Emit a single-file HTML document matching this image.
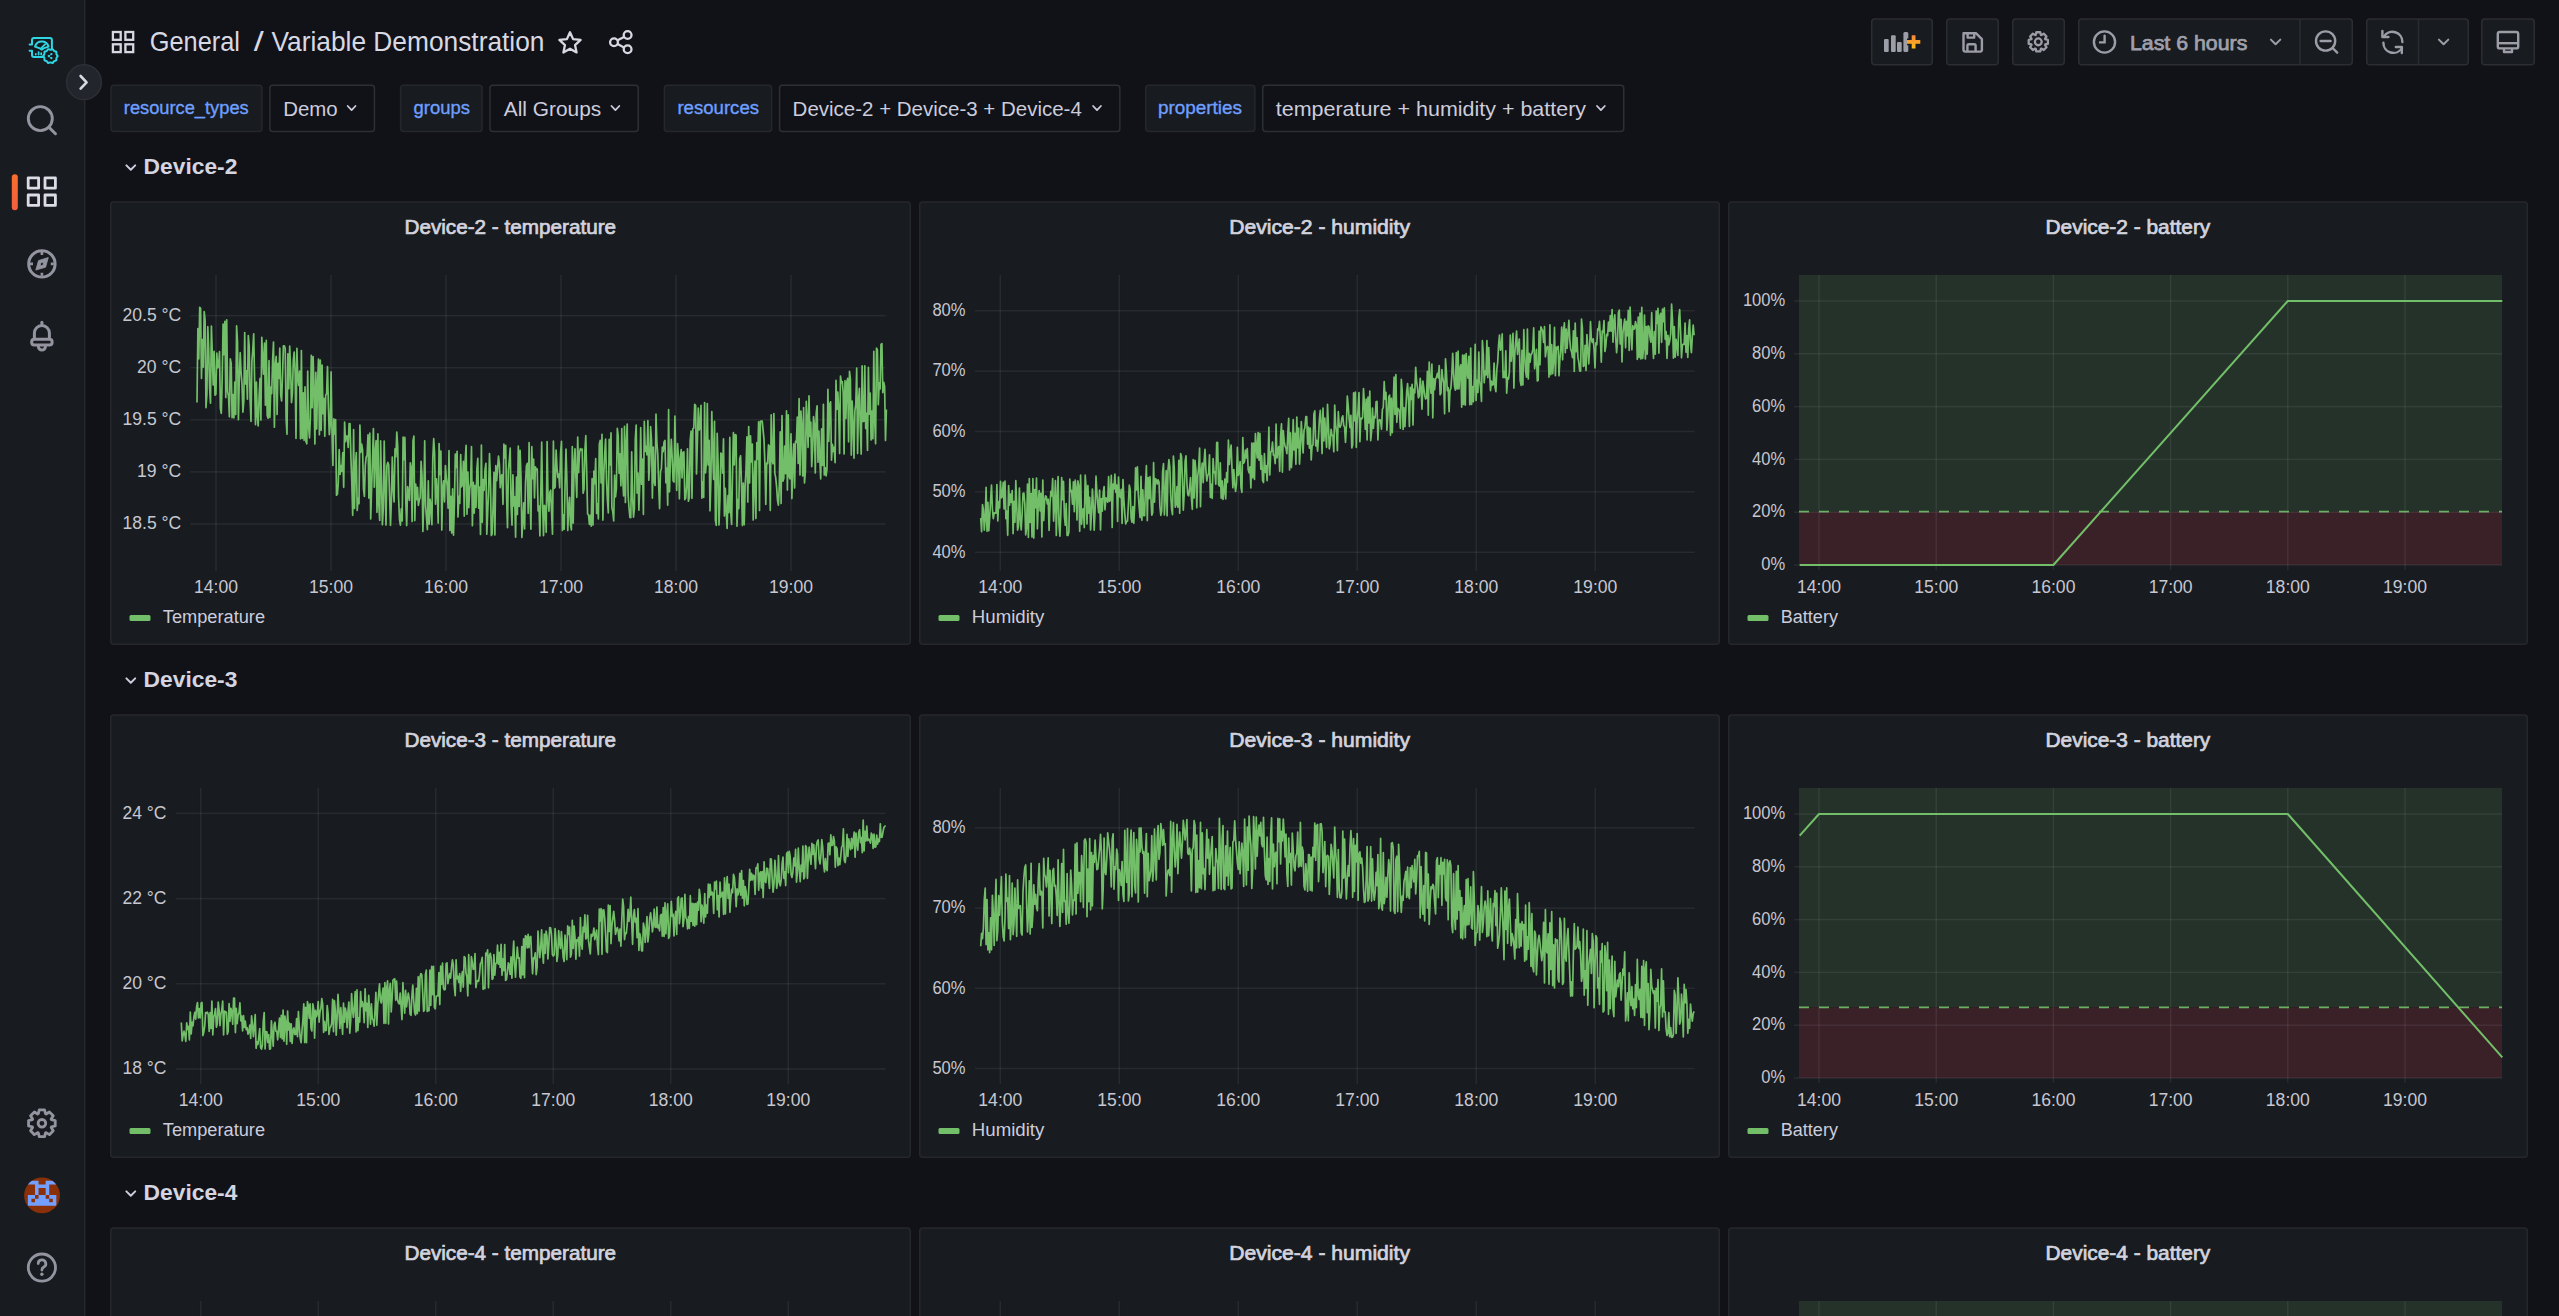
<!DOCTYPE html><html><head><meta charset="utf-8"><style>html,body{margin:0;padding:0;background:#111217;width:2559px;height:1316px;overflow:hidden}svg{display:block;font-family:"Liberation Sans",sans-serif}</style></head><body>
<svg width="2559" height="1316" viewBox="0 0 2559 1316">
<rect x="0" y="0" width="2559" height="1316" fill="#111217"/>
<rect x="0" y="0" width="84" height="1316" fill="#181b1f"/>
<rect x="84" y="0" width="1.5" height="1316" fill="#25272d"/>
<g fill="none" stroke="#2fd6e4" stroke-width="2" stroke-linejoin="round" stroke-linecap="round"><path d="M29.6 44.4 h2.4 V40 a2 2 0 0 1 2 -2 H49.9 a2 2 0 0 1 2 2 V49.6"/><path d="M29.6 50.7 h2.4 V55.1 a2 2 0 0 0 2 2 H43.6"/><path d="M35 46.6 A7.1 7.1 0 0 1 48.6 46.6 L43.4 48.4 L41.7 49.6 L40 48.4 Z"/><path d="M41.7 47.6 L45.2 44.2" stroke-width="1.8"/><path d="M35.8 54.6 v-0.6 M38.6 54.6 v-2.4 M41.2 54.6 v-1.4" stroke-width="1.8"/><polygon points="57.70,56.10 56.39,58.05 56.31,60.39 54.10,61.20 52.66,63.04 50.40,62.40 48.14,63.04 46.70,61.20 44.49,60.39 44.41,58.05 43.10,56.10 44.41,54.15 44.49,51.81 46.70,51.00 48.14,49.16 50.40,49.80 52.66,49.16 54.10,51.00 56.31,51.81 56.39,54.15"/></g>
<g fill="#2fd6e4"><circle cx="48.7" cy="56.1" r="1.1"/><circle cx="51.4" cy="54.1" r="1.1"/><circle cx="51.4" cy="58.2" r="1.1"/></g>
<path d="M48.7 56.1 L51.4 54.1 M48.7 56.1 L51.4 58.2" stroke="#2fd6e4" stroke-width="0.9"/>
<g fill="none" stroke="#9494a0" stroke-width="2.9" stroke-linecap="round"><circle cx="40.3" cy="118.6" r="12"/><path d="M49.3 127.6 l6.2 6.2"/></g>
<rect x="11.8" y="174.2" width="6" height="36" rx="3" fill="url(#og)"/>
<defs><linearGradient id="og" x1="0" y1="0" x2="0" y2="1"><stop offset="0" stop-color="#f76e2c"/><stop offset="1" stop-color="#f55f3e"/></linearGradient></defs>
<g fill="none" stroke="#dcdce6" stroke-width="2.8" stroke-linejoin="round"><rect x="28.2" y="177.8" width="10.4" height="10.4"/><rect x="45" y="177.8" width="10.4" height="10.4"/><rect x="28.2" y="195" width="10.4" height="10.4"/><rect x="45" y="195" width="10.4" height="10.4"/></g>
<g fill="none" stroke="#9494a0" stroke-width="3" stroke-linejoin="round" stroke-linecap="butt"><circle cx="41.9" cy="263.9" r="13.2"/><path d="M41.9 252 v3 M41.9 272.8 v3 M30 263.9 h3 M50.8 263.9 h3" stroke-width="2.6"/></g>
<path d="M48.3 257.5 L45.6 267.2 L35.8 270.1 L38.5 260.6 Z M43.6 262 L40.6 263 L40.2 266 L43.2 265 Z" fill="#9494a0" fill-rule="evenodd" stroke="#9494a0" stroke-width="0.8" stroke-linejoin="round"/>
<g fill="none" stroke="#9494a0" stroke-width="3" stroke-linejoin="round" stroke-linecap="round"><path d="M34.4 338.6 V333 a7.5 7.5 0 0 1 15 0 V338.6"/><rect x="31.7" y="339.2" width="20.4" height="5.8" rx="2.6"/><path d="M38.4 346.6 a3.5 3.5 0 0 0 7 0"/><path d="M41.9 322.2 v2.4"/></g>
<g fill="none" stroke="#9494a0" stroke-width="2.8" stroke-linejoin="round"><polygon points="55.23,1120.60 55.23,1126.00 51.45,1126.89 51.19,1127.51 53.24,1130.81 49.41,1134.64 46.11,1132.59 45.49,1132.85 44.60,1136.63 39.20,1136.63 38.31,1132.85 37.69,1132.59 34.39,1134.64 30.56,1130.81 32.61,1127.51 32.35,1126.89 28.57,1126.00 28.57,1120.60 32.35,1119.71 32.61,1119.09 30.56,1115.79 34.39,1111.96 37.69,1114.01 38.31,1113.75 39.20,1109.97 44.60,1109.97 45.49,1113.75 46.11,1114.01 49.41,1111.96 53.24,1115.79 51.19,1119.09 51.45,1119.71"/><circle cx="41.9" cy="1123.3" r="3.8"/></g>
<clipPath id="avc"><circle cx="42.05" cy="1195.4" r="17.9"/></clipPath>
<g clip-path="url(#avc)"><rect x="23" y="1176" width="40" height="40" fill="#8a3008"/><path fill="#73a0ff" d="M27.86 1180.86 h3.56 v3.56 h-3.56 z M31.42 1180.86 h3.56 v3.56 h-3.56 z M34.98 1180.86 h3.56 v3.56 h-3.56 z M45.66 1180.86 h3.56 v3.56 h-3.56 z M49.22 1180.86 h3.56 v3.56 h-3.56 z M52.78 1180.86 h3.56 v3.56 h-3.56 z M34.98 1184.42 h3.56 v3.56 h-3.56 z M38.54 1184.42 h3.56 v3.56 h-3.56 z M42.10 1184.42 h3.56 v3.56 h-3.56 z M45.66 1184.42 h3.56 v3.56 h-3.56 z M34.98 1187.98 h3.56 v3.56 h-3.56 z M45.66 1187.98 h3.56 v3.56 h-3.56 z M34.98 1191.54 h3.56 v3.56 h-3.56 z M45.66 1191.54 h3.56 v3.56 h-3.56 z M27.86 1195.10 h3.56 v3.56 h-3.56 z M31.42 1195.10 h3.56 v3.56 h-3.56 z M38.54 1195.10 h3.56 v3.56 h-3.56 z M42.10 1195.10 h3.56 v3.56 h-3.56 z M49.22 1195.10 h3.56 v3.56 h-3.56 z M52.78 1195.10 h3.56 v3.56 h-3.56 z M27.86 1198.66 h3.56 v3.56 h-3.56 z M34.98 1198.66 h3.56 v3.56 h-3.56 z M38.54 1198.66 h3.56 v3.56 h-3.56 z M42.10 1198.66 h3.56 v3.56 h-3.56 z M45.66 1198.66 h3.56 v3.56 h-3.56 z M52.78 1198.66 h3.56 v3.56 h-3.56 z M27.86 1202.22 h3.56 v3.56 h-3.56 z M31.42 1202.22 h3.56 v3.56 h-3.56 z M34.98 1202.22 h3.56 v3.56 h-3.56 z M38.54 1202.22 h3.56 v3.56 h-3.56 z M42.10 1202.22 h3.56 v3.56 h-3.56 z M45.66 1202.22 h3.56 v3.56 h-3.56 z M49.22 1202.22 h3.56 v3.56 h-3.56 z M52.78 1202.22 h3.56 v3.56 h-3.56 z "/></g>
<g fill="none" stroke="#9494a0" stroke-width="2.8" stroke-linecap="round"><circle cx="41.9" cy="1267.6" r="13.6"/><path d="M38.2 1263.6 a3.8 3.8 0 1 1 5.6 3.4 c-1.4 0.8 -1.9 1.6 -1.9 3"/></g><circle cx="41.9" cy="1274.2" r="1.7" fill="#9494a0"/>
<circle cx="84" cy="82.2" r="17.4" fill="#22252b" stroke="#2c2f35" stroke-width="1.5"/>
<path d="M80.6 76 l6 6.3 l-6 6.3" fill="none" stroke="#d8d8e2" stroke-width="2.6" stroke-linecap="round" stroke-linejoin="round"/>
<g fill="none" stroke="#d8d8e2" stroke-width="2.3"><rect x="112.9" y="32" width="7.8" height="7.8"/><rect x="125.4" y="32" width="7.8" height="7.8"/><rect x="112.9" y="44.3" width="7.8" height="7.8"/><rect x="125.4" y="44.3" width="7.8" height="7.8"/></g>
<text x="149.80" y="50.9" font-size="27.5" fill="#d8d9e3" font-weight="normal" textLength="90.16" lengthAdjust="spacingAndGlyphs" >General</text>
<text x="253.80" y="50.9" font-size="27.5" fill="#d8d9e3" font-weight="normal" textLength="10.03" lengthAdjust="spacingAndGlyphs" >/</text>
<text x="271.50" y="50.9" font-size="27.5" fill="#d8d9e3" font-weight="normal" textLength="272.93" lengthAdjust="spacingAndGlyphs" >Variable Demonstration</text>
<polygon points="570.00,32.20 573.12,39.11 580.65,39.94 575.04,45.04 576.58,52.46 570.00,48.70 563.42,52.46 564.96,45.04 559.35,39.94 566.88,39.11" fill="none" stroke="#d8d8e2" stroke-width="2.3" stroke-linejoin="round"/>
<g fill="none" stroke="#d8d8e2" stroke-width="2.3"><circle cx="627.6" cy="35" r="3.9"/><circle cx="614" cy="42.2" r="3.9"/><circle cx="627.6" cy="49.3" r="3.9"/><path d="M617.6 40.3 l6.4 -3.4 M617.6 44.1 l6.4 3.4"/></g>
<rect x="1871.75" y="18.95" width="60.5" height="45.8" rx="3" fill="#181b1f" stroke="#2a2d33" stroke-width="1.5"/>
<rect x="1946.75" y="18.95" width="51.5" height="45.8" rx="3" fill="#181b1f" stroke="#2a2d33" stroke-width="1.5"/>
<rect x="2012.75" y="18.95" width="51.5" height="45.8" rx="3" fill="#181b1f" stroke="#2a2d33" stroke-width="1.5"/>
<rect x="2078.75" y="18.95" width="273.5" height="45.8" rx="3" fill="#181b1f" stroke="#2a2d33" stroke-width="1.5"/>
<rect x="2299.3" y="19" width="1.5" height="46" fill="#2a2d33"/>
<rect x="2366.75" y="18.95" width="101.5" height="45.8" rx="3" fill="#181b1f" stroke="#2a2d33" stroke-width="1.5"/>
<rect x="2417.8" y="19" width="1.5" height="46" fill="#2a2d33"/>
<rect x="2481.75" y="18.95" width="52.5" height="45.8" rx="3" fill="#181b1f" stroke="#2a2d33" stroke-width="1.5"/>
<g fill="#9d9da8"><rect x="1884" y="39.1" width="4.7" height="12.9" rx="1"/><rect x="1891" y="35.3" width="4.7" height="16.7" rx="1"/><rect x="1897" y="42" width="4.7" height="10" rx="1"/><rect x="1903.4" y="32" width="4.9" height="20" rx="1.5"/></g>
<path d="M1907 41.9 h13.2 M1913.6 35.3 v13.2" stroke="#181b1f" stroke-width="6.6"/>
<defs><linearGradient id="pg" x1="0" y1="0" x2="0" y2="1"><stop offset="0" stop-color="#f7843a"/><stop offset="1" stop-color="#fbbf1a"/></linearGradient></defs>
<path d="M1906.9 40 h13.4 v3.8 h-13.4 z M1911.7 35.2 h3.8 v13.4 h-3.8 z" fill="url(#pg)"/>
<g fill="none" stroke="#9d9da8" stroke-width="2.4" stroke-linejoin="round"><path d="M1963.5 33.2 h12.4 l6 6 v10.8 a1.6 1.6 0 0 1 -1.6 1.6 h-15.2 a1.6 1.6 0 0 1 -1.6 -1.6 v-15.2 a1.6 1.6 0 0 1 1.6 -1.6 z"/><path d="M1967.6 33.4 v4.2 h6.6 v-4.2"/><path d="M1967.4 51.2 v-5.6 a1.4 1.4 0 0 1 1.4 -1.4 h5.4 a1.4 1.4 0 0 1 1.4 1.4 v5.6"/></g>
<g fill="none" stroke="#9d9da8" stroke-width="2.3" stroke-linejoin="round"><polygon points="2047.90,39.90 2047.90,43.80 2045.23,44.46 2045.04,44.90 2046.47,47.26 2043.71,50.02 2041.35,48.59 2040.91,48.78 2040.25,51.45 2036.35,51.45 2035.69,48.78 2035.25,48.59 2032.89,50.02 2030.13,47.26 2031.56,44.90 2031.37,44.46 2028.70,43.80 2028.70,39.90 2031.37,39.24 2031.56,38.80 2030.13,36.44 2032.89,33.68 2035.25,35.11 2035.69,34.92 2036.35,32.25 2040.25,32.25 2040.91,34.92 2041.35,35.11 2043.71,33.68 2046.47,36.44 2045.04,38.80 2045.23,39.24"/><circle cx="2038.3" cy="41.85" r="3.4"/></g>
<g fill="none" stroke="#9d9da8" stroke-width="2.4" stroke-linecap="round"><circle cx="2104.5" cy="42" r="10.6"/><path d="M2104.6 35.6 v6.8 h-4.6"/></g>
<text x="2130.00" y="50.1" font-size="21" fill="#a0a0ac" font-weight="normal" textLength="117.31" lengthAdjust="spacingAndGlyphs" stroke="#a0a0ac" stroke-width="0.75">Last 6 hours</text>
<path d="M2270.9 39.6 l4.7 4.7 l4.7 -4.7" fill="none" stroke="#9d9da8" stroke-width="2" stroke-linecap="round" stroke-linejoin="round"/>
<g fill="none" stroke="#9d9da8" stroke-width="2.4" stroke-linecap="round"><circle cx="2325.6" cy="41" r="9.6"/><path d="M2320.6 41 h10 M2332.6 48 l4.6 4.6"/></g>
<g fill="none" stroke="#9d9da8" stroke-width="2.4" stroke-linecap="round" stroke-linejoin="round"><path d="M2383.4 42.6 a10 10 0 0 0 18.6 5.4"/><path d="M2402.4 42 a10 10 0 0 0 -18.4 -5.6"/><path d="M2382.4 31 v6 h6"/><path d="M2401.8 53 v-6 h-6"/></g>
<path d="M2438.9 39.6 l4.7 4.7 l4.7 -4.7" fill="none" stroke="#9d9da8" stroke-width="2" stroke-linecap="round" stroke-linejoin="round"/>
<g fill="none" stroke="#9d9da8" stroke-width="2.4" stroke-linejoin="round"><rect x="2497.8" y="32" width="20.4" height="16.4" rx="2"/><path d="M2498 43.2 h20"/><path d="M2504 48.6 v3.4 h8 v-3.4"/></g>
<rect x="111.05" y="85.15" width="150.89999999999998" height="46.29999999999998" rx="3" fill="#181b1f" stroke="#24272c" stroke-width="1.5"/>
<rect x="269.84999999999997" y="85.15" width="104.60000000000002" height="46.29999999999998" rx="3" fill="#111217" stroke="#2c2f36" stroke-width="1.5"/>
<text x="123.80" y="113.7" font-size="18" fill="#6e9fff" font-weight="normal" textLength="124.91" lengthAdjust="spacingAndGlyphs" stroke="#6e9fff" stroke-width="0.35">resource_types</text>
<text x="283.20" y="116" font-size="21" fill="#ccccdc" font-weight="normal" textLength="54.52" lengthAdjust="spacingAndGlyphs" >Demo</text>
<path d="M347.7 106 l3.9 4.1 l3.9 -4.1" fill="none" stroke="#ccccdc" stroke-width="1.8" stroke-linecap="round" stroke-linejoin="round"/>
<rect x="400.65" y="85.15" width="81.40000000000003" height="46.29999999999998" rx="3" fill="#181b1f" stroke="#24272c" stroke-width="1.5"/>
<rect x="489.95" y="85.15" width="148.3" height="46.29999999999998" rx="3" fill="#111217" stroke="#2c2f36" stroke-width="1.5"/>
<text x="413.60" y="113.7" font-size="18" fill="#6e9fff" font-weight="normal" textLength="56.36" lengthAdjust="spacingAndGlyphs" stroke="#6e9fff" stroke-width="0.35">groups</text>
<text x="503.80" y="116" font-size="21" fill="#ccccdc" font-weight="normal" textLength="97.42" lengthAdjust="spacingAndGlyphs" >All Groups</text>
<path d="M611.5 106 l3.9 4.1 l3.9 -4.1" fill="none" stroke="#ccccdc" stroke-width="1.8" stroke-linecap="round" stroke-linejoin="round"/>
<rect x="664.35" y="85.15" width="107.29999999999995" height="46.29999999999998" rx="3" fill="#181b1f" stroke="#24272c" stroke-width="1.5"/>
<rect x="779.55" y="85.15" width="340.29999999999995" height="46.29999999999998" rx="3" fill="#111217" stroke="#2c2f36" stroke-width="1.5"/>
<text x="677.40" y="113.7" font-size="18" fill="#6e9fff" font-weight="normal" textLength="81.66" lengthAdjust="spacingAndGlyphs" stroke="#6e9fff" stroke-width="0.35">resources</text>
<text x="792.60" y="116" font-size="21" fill="#ccccdc" font-weight="normal" textLength="289.24" lengthAdjust="spacingAndGlyphs" >Device-2 + Device-3 + Device-4</text>
<path d="M1093.1 106 l3.9 4.1 l3.9 -4.1" fill="none" stroke="#ccccdc" stroke-width="1.8" stroke-linecap="round" stroke-linejoin="round"/>
<rect x="1145.75" y="85.15" width="109.09999999999991" height="46.29999999999998" rx="3" fill="#181b1f" stroke="#24272c" stroke-width="1.5"/>
<rect x="1262.75" y="85.15" width="361.0" height="46.29999999999998" rx="3" fill="#111217" stroke="#2c2f36" stroke-width="1.5"/>
<text x="1158.00" y="113.7" font-size="18" fill="#6e9fff" font-weight="normal" textLength="83.98" lengthAdjust="spacingAndGlyphs" stroke="#6e9fff" stroke-width="0.35">properties</text>
<text x="1275.80" y="116" font-size="21" fill="#ccccdc" font-weight="normal" textLength="310.28" lengthAdjust="spacingAndGlyphs" >temperature + humidity + battery</text>
<path d="M1597.0 106 l3.9 4.1 l3.9 -4.1" fill="none" stroke="#ccccdc" stroke-width="1.8" stroke-linecap="round" stroke-linejoin="round"/>
<path d="M126.4 165.4 l4.4 4.4 l4.4 -4.4" fill="none" stroke="#ccccdc" stroke-width="2" stroke-linecap="round" stroke-linejoin="round"/>
<text x="143.60" y="173.8" font-size="22.6" fill="#d4d5e0" font-weight="bold" textLength="93.74" lengthAdjust="spacingAndGlyphs" >Device-2</text>
<rect x="110.75" y="201.9" width="799.5" height="442.35" rx="3" fill="#181b1f" stroke="#24272c" stroke-width="1.5"/>
<text x="404.44" y="234.4" font-size="20" fill="#d2d3de" font-weight="normal" textLength="211.63" lengthAdjust="spacingAndGlyphs" stroke="#d2d3de" stroke-width="0.7">Device-2 - temperature</text>
<rect x="215.25" y="275" width="1.5" height="296" fill="rgba(204,204,220,0.085)"/>
<text x="194.05" y="592.5" font-size="18" fill="#c7c7d1" font-weight="normal" textLength="43.96" lengthAdjust="spacingAndGlyphs" >14:00</text>
<rect x="330.25" y="275" width="1.5" height="296" fill="rgba(204,204,220,0.085)"/>
<text x="309.05" y="592.5" font-size="18" fill="#c7c7d1" font-weight="normal" textLength="43.96" lengthAdjust="spacingAndGlyphs" >15:00</text>
<rect x="445.25" y="275" width="1.5" height="296" fill="rgba(204,204,220,0.085)"/>
<text x="424.05" y="592.5" font-size="18" fill="#c7c7d1" font-weight="normal" textLength="43.96" lengthAdjust="spacingAndGlyphs" >16:00</text>
<rect x="560.25" y="275" width="1.5" height="296" fill="rgba(204,204,220,0.085)"/>
<text x="539.05" y="592.5" font-size="18" fill="#c7c7d1" font-weight="normal" textLength="43.96" lengthAdjust="spacingAndGlyphs" >17:00</text>
<rect x="675.25" y="275" width="1.5" height="296" fill="rgba(204,204,220,0.085)"/>
<text x="654.05" y="592.5" font-size="18" fill="#c7c7d1" font-weight="normal" textLength="43.96" lengthAdjust="spacingAndGlyphs" >18:00</text>
<rect x="790.25" y="275" width="1.5" height="296" fill="rgba(204,204,220,0.085)"/>
<text x="769.05" y="592.5" font-size="18" fill="#c7c7d1" font-weight="normal" textLength="43.96" lengthAdjust="spacingAndGlyphs" >19:00</text>
<rect x="190.3" y="314.85" width="695.4000000000001" height="1.5" fill="rgba(204,204,220,0.085)"/>
<text x="122.50" y="320.90000000000003" font-size="18" fill="#c7c7d1" font-weight="normal" textLength="58.74" lengthAdjust="spacingAndGlyphs" >20.5 °C</text>
<rect x="190.3" y="366.95" width="695.4000000000001" height="1.5" fill="rgba(204,204,220,0.085)"/>
<text x="137.12" y="373.00000000000006" font-size="18" fill="#c7c7d1" font-weight="normal" textLength="44.10" lengthAdjust="spacingAndGlyphs" >20 °C</text>
<rect x="190.3" y="419.05" width="695.4000000000001" height="1.5" fill="rgba(204,204,220,0.085)"/>
<text x="122.50" y="425.1" font-size="18" fill="#c7c7d1" font-weight="normal" textLength="58.74" lengthAdjust="spacingAndGlyphs" >19.5 °C</text>
<rect x="190.3" y="471.15" width="695.4000000000001" height="1.5" fill="rgba(204,204,220,0.085)"/>
<text x="137.12" y="477.20000000000005" font-size="18" fill="#c7c7d1" font-weight="normal" textLength="44.10" lengthAdjust="spacingAndGlyphs" >19 °C</text>
<rect x="190.3" y="523.25" width="695.4000000000001" height="1.5" fill="rgba(204,204,220,0.085)"/>
<text x="122.50" y="529.3" font-size="18" fill="#c7c7d1" font-weight="normal" textLength="58.74" lengthAdjust="spacingAndGlyphs" >18.5 °C</text>
<clipPath id="cp1"><rect x="185.3" y="262" width="704.7" height="314"/></clipPath>
<polyline clip-path="url(#cp1)" points="197.0,402.6 197.9,328.6 198.8,359.0 199.7,307.4 200.6,308.4 201.5,378.4 202.4,339.6 203.3,367.1 204.2,311.5 205.1,320.2 206.0,407.6 206.9,393.9 207.8,326.7 208.7,349.3 209.6,387.7 210.5,403.2 211.4,326.0 212.3,353.3 213.2,385.1 214.1,351.3 215.0,395.2 215.9,394.2 216.8,353.2 217.7,367.8 218.6,366.1 219.5,351.7 220.4,408.7 221.3,413.3 222.2,377.9 223.1,324.0 224.0,354.6 224.9,321.3 225.8,397.5 226.7,319.8 227.6,391.6 228.5,396.2 229.4,416.8 230.3,358.8 231.2,363.4 232.1,417.7 233.0,394.5 233.9,417.9 234.8,382.1 235.7,414.6 236.6,325.9 237.5,341.7 238.4,419.7 239.3,378.1 240.2,352.7 241.1,372.9 242.0,383.7 242.9,412.1 243.8,401.2 244.7,332.5 245.6,383.9 246.5,370.8 247.4,399.2 248.3,335.6 249.2,346.0 250.1,399.7 251.0,421.5 251.9,361.4 252.8,350.0 253.7,333.8 254.6,379.3 255.5,424.7 256.4,382.2 257.3,415.9 258.2,426.0 259.1,396.6 260.0,378.3 260.9,420.1 261.8,337.3 262.7,358.1 263.6,374.2 264.5,343.2 265.4,405.2 266.3,340.4 267.2,415.5 268.1,418.2 269.0,360.6 269.9,417.4 270.8,387.1 271.7,393.6 272.6,360.6 273.5,342.0 274.4,427.2 275.3,364.8 276.2,356.4 277.1,414.4 278.0,363.3 278.9,378.5 279.8,348.0 280.7,394.8 281.6,401.0 282.5,376.5 283.4,345.9 284.3,345.9 285.2,348.2 286.1,418.6 287.0,434.3 287.9,353.8 288.8,388.7 289.7,346.0 290.6,369.6 291.5,402.6 292.4,393.5 293.3,360.0 294.2,352.1 295.1,371.2 296.0,438.3 296.9,348.4 297.8,377.5 298.7,385.3 299.6,371.0 300.5,438.8 301.4,350.6 302.3,438.4 303.2,392.8 304.1,440.3 305.0,386.8 305.9,441.3 306.8,443.8 307.7,371.2 308.6,426.9 309.5,437.9 310.4,417.2 311.3,355.3 312.2,407.7 313.1,356.6 314.0,390.1 314.9,444.0 315.8,372.4 316.7,429.0 317.6,382.4 318.5,359.0 319.4,434.7 320.3,360.0 321.2,430.3 322.1,365.1 323.0,413.6 323.9,398.4 324.8,436.3 325.7,395.0 326.6,394.0 327.5,366.5 328.4,407.3 329.3,434.7 330.2,424.9 331.1,371.9 332.0,433.0 332.9,465.5 333.8,418.9 334.7,434.0 335.6,419.5 336.5,495.2 337.4,494.2 338.3,482.7 339.2,449.6 340.1,474.5 341.0,465.7 341.9,471.3 342.8,452.7 343.7,487.3 344.6,422.1 345.5,441.6 346.4,436.2 347.3,436.0 348.2,447.4 349.1,423.5 350.0,423.5 350.9,456.7 351.8,482.2 352.7,515.3 353.6,429.7 354.5,508.5 355.4,465.2 356.3,452.7 357.2,510.5 358.1,498.3 359.0,503.7 359.9,425.1 360.8,452.5 361.7,444.2 362.6,450.0 363.5,488.9 364.4,496.4 365.3,465.7 366.2,456.9 367.1,455.3 368.0,434.9 368.9,498.1 369.8,433.2 370.7,519.0 371.6,488.9 372.5,459.4 373.4,428.6 374.3,487.2 375.2,452.2 376.1,440.6 377.0,512.3 377.9,433.9 378.8,504.4 379.7,520.4 380.6,440.8 381.5,484.0 382.4,524.8 383.3,508.0 384.2,441.1 385.1,485.9 386.0,525.1 386.9,465.7 387.8,462.4 388.7,464.8 389.6,495.5 390.5,525.5 391.4,499.5 392.3,457.1 393.2,488.7 394.1,501.9 395.0,448.9 395.9,456.8 396.8,432.0 397.7,445.7 398.6,497.8 399.5,519.3 400.4,525.2 401.3,508.8 402.2,521.0 403.1,437.0 404.0,459.6 404.9,437.4 405.8,502.3 406.7,525.6 407.6,486.7 408.5,493.6 409.4,500.4 410.3,462.9 411.2,468.2 412.1,521.5 413.0,440.8 413.9,436.1 414.8,520.6 415.7,484.1 416.6,499.7 417.5,487.3 418.4,505.4 419.3,500.2 420.2,497.4 421.1,461.4 422.0,475.3 422.9,531.5 423.8,501.0 424.7,440.8 425.6,506.0 426.5,517.9 427.4,529.6 428.3,480.8 429.2,524.2 430.1,499.4 431.0,507.3 431.9,524.7 432.8,458.7 433.7,438.7 434.6,453.3 435.5,504.1 436.4,478.9 437.3,492.3 438.2,523.1 439.1,443.5 440.0,474.6 440.9,451.0 441.8,530.1 442.7,488.1 443.6,480.8 444.5,501.9 445.4,465.6 446.3,477.9 447.2,486.0 448.1,508.2 449.0,450.7 449.9,530.5 450.8,496.3 451.7,533.1 452.6,488.9 453.5,535.1 454.4,504.6 455.3,454.1 456.2,467.4 457.1,451.3 458.0,517.0 458.9,496.4 459.8,503.4 460.7,454.5 461.6,486.9 462.5,483.6 463.4,461.4 464.3,516.1 465.2,460.5 466.1,445.4 467.0,514.2 467.9,472.1 468.8,507.7 469.7,489.2 470.6,482.9 471.5,446.5 472.4,525.7 473.3,482.4 474.2,513.1 475.1,485.3 476.0,507.4 476.9,468.8 477.8,458.4 478.7,508.2 479.6,487.1 480.5,534.4 481.4,445.0 482.3,522.3 483.2,479.6 484.1,490.3 485.0,469.8 485.9,463.3 486.8,534.2 487.7,512.1 488.6,490.9 489.5,453.6 490.4,477.6 491.3,535.5 492.2,533.8 493.1,505.6 494.0,472.3 494.9,534.9 495.8,465.5 496.7,480.7 497.6,468.0 498.5,456.0 499.4,464.4 500.3,487.7 501.2,475.9 502.1,474.6 503.0,504.4 503.9,444.2 504.8,458.0 505.7,445.3 506.6,497.4 507.5,527.7 508.4,469.8 509.3,460.7 510.2,448.2 511.1,506.8 512.0,525.2 512.9,474.8 513.8,506.0 514.7,496.9 515.6,537.2 516.5,477.2 517.4,514.5 518.3,446.2 519.2,506.4 520.1,450.3 521.0,477.7 521.9,537.4 522.8,521.1 523.7,502.8 524.6,529.0 525.5,483.3 526.4,466.0 527.3,463.4 528.2,513.3 529.1,442.6 530.0,495.4 530.9,529.2 531.8,446.7 532.7,478.7 533.6,459.0 534.5,497.9 535.4,466.8 536.3,469.9 537.2,469.0 538.1,510.9 539.0,506.0 539.9,535.9 540.8,492.2 541.7,442.1 542.6,502.7 543.5,535.7 544.4,505.4 545.3,507.5 546.2,532.3 547.1,441.5 548.0,496.8 548.9,511.1 549.8,492.3 550.7,490.2 551.6,513.2 552.5,534.2 553.4,441.2 554.3,488.3 555.2,487.0 556.1,450.0 557.0,467.8 557.9,477.4 558.8,474.1 559.7,487.8 560.6,452.8 561.5,441.3 562.4,530.5 563.3,514.9 564.2,529.4 565.1,482.7 566.0,449.2 566.9,480.0 567.8,530.4 568.7,507.4 569.6,497.4 570.5,525.0 571.4,529.8 572.3,446.5 573.2,523.1 574.1,463.0 575.0,448.8 575.9,477.5 576.8,497.4 577.7,437.2 578.6,472.6 579.5,452.6 580.4,448.6 581.3,449.9 582.2,449.1 583.1,493.2 584.0,489.4 584.9,450.5 585.8,435.7 586.7,472.5 587.6,514.0 588.5,514.6 589.4,524.3 590.3,515.4 591.2,526.2 592.1,478.7 593.0,525.1 593.9,471.1 594.8,483.6 595.7,458.5 596.6,513.5 597.5,503.8 598.4,518.9 599.3,444.5 600.2,440.4 601.1,483.0 602.0,434.3 602.9,520.1 603.8,474.5 604.7,453.5 605.6,439.1 606.5,479.2 607.4,500.1 608.3,512.9 609.2,439.4 610.1,464.9 611.0,432.9 611.9,507.9 612.8,511.6 613.7,521.0 614.6,475.0 615.5,496.9 616.4,488.4 617.3,428.3 618.2,435.5 619.1,473.3 620.0,453.8 620.9,485.8 621.8,428.5 622.7,477.9 623.6,496.0 624.5,426.3 625.4,502.4 626.3,443.1 627.2,424.1 628.1,494.4 629.0,507.5 629.9,517.5 630.8,517.6 631.7,451.9 632.6,497.6 633.5,517.1 634.4,508.3 635.3,439.1 636.2,425.1 637.1,493.0 638.0,473.1 638.9,510.2 639.8,482.9 640.7,427.7 641.6,484.2 642.5,459.2 643.4,514.3 644.3,421.4 645.2,451.4 646.1,446.6 647.0,454.8 647.9,420.7 648.8,480.2 649.7,462.7 650.6,426.7 651.5,440.2 652.4,498.1 653.3,447.0 654.2,481.5 655.1,485.5 656.0,414.2 656.9,442.5 657.8,454.9 658.7,485.5 659.6,508.6 660.5,471.1 661.4,469.0 662.3,447.0 663.2,451.7 664.1,441.9 665.0,440.4 665.9,482.8 666.8,468.1 667.7,505.2 668.6,409.7 669.5,491.8 670.4,458.5 671.3,439.4 672.2,457.6 673.1,480.7 674.0,482.0 674.9,416.2 675.8,461.4 676.7,490.5 677.6,443.7 678.5,457.8 679.4,498.8 680.3,458.4 681.2,449.6 682.1,478.0 683.0,452.5 683.9,451.8 684.8,499.6 685.7,498.3 686.6,485.5 687.5,448.8 688.4,501.2 689.3,497.4 690.2,440.6 691.1,431.2 692.0,498.3 692.9,428.6 693.8,428.0 694.7,404.4 695.6,405.3 696.5,473.9 697.4,441.6 698.3,408.1 699.2,429.9 700.1,427.2 701.0,405.4 701.9,498.1 702.8,481.9 703.7,497.5 704.6,402.6 705.5,472.8 706.4,462.7 707.3,403.5 708.2,465.0 709.1,440.3 710.0,510.8 710.9,479.4 711.8,411.6 712.7,452.6 713.6,479.5 714.5,421.3 715.4,520.4 716.3,525.3 717.2,433.3 718.1,464.3 719.0,525.0 719.9,499.5 720.8,453.0 721.7,454.4 722.6,473.1 723.5,438.8 724.4,515.9 725.3,488.4 726.2,511.1 727.1,528.4 728.0,495.7 728.9,512.6 729.8,437.4 730.7,511.0 731.6,524.5 732.5,474.5 733.4,432.6 734.3,464.9 735.2,434.5 736.1,435.1 737.0,526.2 737.9,499.5 738.8,508.6 739.7,458.9 740.6,455.7 741.5,484.4 742.4,525.6 743.3,483.2 744.2,524.8 745.1,486.2 746.0,470.1 746.9,436.9 747.8,501.9 748.7,426.5 749.6,483.0 750.5,435.8 751.4,461.9 752.3,444.1 753.2,519.9 754.1,483.2 755.0,461.1 755.9,518.4 756.8,442.7 757.7,459.2 758.6,421.9 759.5,510.5 760.4,421.3 761.3,421.1 762.2,421.1 763.1,430.2 764.0,439.4 764.9,464.0 765.8,504.5 766.7,463.1 767.6,463.5 768.5,444.9 769.4,446.2 770.3,510.3 771.2,414.8 772.1,460.3 773.0,463.8 773.9,413.6 774.8,473.2 775.7,477.6 776.6,486.6 777.5,500.4 778.4,505.1 779.3,485.7 780.2,431.9 781.1,503.5 782.0,415.5 782.9,481.1 783.8,478.5 784.7,446.0 785.6,473.7 786.5,410.9 787.4,490.1 788.3,414.8 789.2,476.7 790.1,478.8 791.0,433.8 791.9,498.6 792.8,463.7 793.7,443.9 794.6,487.9 795.5,441.4 796.4,442.3 797.3,417.1 798.2,463.4 799.1,398.7 800.0,474.9 800.9,411.0 801.8,425.3 802.7,476.0 803.6,407.6 804.5,482.9 805.4,471.2 806.3,401.3 807.2,421.3 808.1,447.4 809.0,395.8 809.9,436.5 810.8,422.2 811.7,466.7 812.6,449.7 813.5,416.7 814.4,424.0 815.3,472.9 816.2,413.3 817.1,405.8 818.0,462.2 818.9,431.0 819.8,458.5 820.7,478.9 821.6,428.8 822.5,465.4 823.4,404.3 824.3,474.9 825.2,467.5 826.1,476.0 827.0,468.6 827.9,389.3 828.8,441.3 829.7,404.1 830.6,401.8 831.5,460.1 832.4,444.3 833.3,451.3 834.2,447.3 835.1,462.7 836.0,380.4 836.9,409.5 837.8,392.1 838.7,410.3 839.6,453.6 840.5,376.1 841.4,382.7 842.3,381.7 843.2,392.5 844.1,454.0 845.0,380.6 845.9,418.4 846.8,382.0 847.7,378.4 848.6,441.8 849.5,371.3 850.4,379.2 851.3,455.1 852.2,401.1 853.1,424.5 854.0,458.2 854.9,410.9 855.8,404.3 856.7,368.1 857.6,453.4 858.5,400.6 859.4,388.4 860.3,427.9 861.2,454.1 862.1,365.8 863.0,421.4 863.9,421.5 864.8,365.8 865.7,428.5 866.6,413.3 867.5,450.4 868.4,367.4 869.3,414.2 870.2,393.0 871.1,439.9 872.0,411.0 872.9,438.8 873.8,351.3 874.7,421.0 875.6,443.8 876.5,348.1 877.4,349.8 878.3,404.7 879.2,382.8 880.1,389.0 881.0,344.3 881.9,343.6 882.8,392.6 883.7,382.3 884.6,386.1 885.5,440.5 886.4,409.5" fill="none" stroke="#73bf69" stroke-width="1.7" stroke-linejoin="round"/>
<rect x="129.5" y="615" width="21" height="6" rx="1.5" fill="#73bf69"/>
<text x="162.80" y="623.2" font-size="18" fill="#ccccdc" font-weight="normal" textLength="102.29" lengthAdjust="spacingAndGlyphs" >Temperature</text>
<rect x="919.75" y="201.9" width="799.5" height="442.35" rx="3" fill="#181b1f" stroke="#24272c" stroke-width="1.5"/>
<text x="1229.16" y="234.4" font-size="20" fill="#d2d3de" font-weight="normal" textLength="180.85" lengthAdjust="spacingAndGlyphs" stroke="#d2d3de" stroke-width="0.7">Device-2 - humidity</text>
<rect x="999.55" y="275" width="1.5" height="296" fill="rgba(204,204,220,0.085)"/>
<text x="978.35" y="592.5" font-size="18" fill="#c7c7d1" font-weight="normal" textLength="43.96" lengthAdjust="spacingAndGlyphs" >14:00</text>
<rect x="1118.55" y="275" width="1.5" height="296" fill="rgba(204,204,220,0.085)"/>
<text x="1097.35" y="592.5" font-size="18" fill="#c7c7d1" font-weight="normal" textLength="43.96" lengthAdjust="spacingAndGlyphs" >15:00</text>
<rect x="1237.55" y="275" width="1.5" height="296" fill="rgba(204,204,220,0.085)"/>
<text x="1216.35" y="592.5" font-size="18" fill="#c7c7d1" font-weight="normal" textLength="43.96" lengthAdjust="spacingAndGlyphs" >16:00</text>
<rect x="1356.55" y="275" width="1.5" height="296" fill="rgba(204,204,220,0.085)"/>
<text x="1335.35" y="592.5" font-size="18" fill="#c7c7d1" font-weight="normal" textLength="43.96" lengthAdjust="spacingAndGlyphs" >17:00</text>
<rect x="1475.55" y="275" width="1.5" height="296" fill="rgba(204,204,220,0.085)"/>
<text x="1454.35" y="592.5" font-size="18" fill="#c7c7d1" font-weight="normal" textLength="43.96" lengthAdjust="spacingAndGlyphs" >18:00</text>
<rect x="1594.55" y="275" width="1.5" height="296" fill="rgba(204,204,220,0.085)"/>
<text x="1573.35" y="592.5" font-size="18" fill="#c7c7d1" font-weight="normal" textLength="43.96" lengthAdjust="spacingAndGlyphs" >19:00</text>
<rect x="975" y="309.95" width="719.5" height="1.5" fill="rgba(204,204,220,0.085)"/>
<text x="932.38" y="315.99999999999994" font-size="18" fill="#c7c7d1" font-weight="normal" textLength="33.15" lengthAdjust="spacingAndGlyphs" >80%</text>
<rect x="975" y="370.35" width="719.5" height="1.5" fill="rgba(204,204,220,0.085)"/>
<text x="932.38" y="376.4" font-size="18" fill="#c7c7d1" font-weight="normal" textLength="33.15" lengthAdjust="spacingAndGlyphs" >70%</text>
<rect x="975" y="430.75" width="719.5" height="1.5" fill="rgba(204,204,220,0.085)"/>
<text x="932.38" y="436.79999999999995" font-size="18" fill="#c7c7d1" font-weight="normal" textLength="33.15" lengthAdjust="spacingAndGlyphs" >60%</text>
<rect x="975" y="491.15" width="719.5" height="1.5" fill="rgba(204,204,220,0.085)"/>
<text x="932.38" y="497.2" font-size="18" fill="#c7c7d1" font-weight="normal" textLength="33.15" lengthAdjust="spacingAndGlyphs" >50%</text>
<rect x="975" y="551.55" width="719.5" height="1.5" fill="rgba(204,204,220,0.085)"/>
<text x="932.38" y="557.5999999999999" font-size="18" fill="#c7c7d1" font-weight="normal" textLength="33.15" lengthAdjust="spacingAndGlyphs" >40%</text>
<clipPath id="cp2"><rect x="970" y="262" width="730" height="314"/></clipPath>
<polyline clip-path="url(#cp2)" points="980.7,517.9 981.6,531.7 982.5,504.7 983.4,509.8 984.3,530.2 985.2,518.6 986.1,487.3 987.0,531.3 987.9,502.4 988.8,530.8 989.7,517.5 990.6,500.2 991.5,485.0 992.4,509.1 993.3,518.6 994.2,512.9 995.1,513.2 996.0,513.1 996.9,484.6 997.8,520.9 998.7,501.5 999.6,507.9 1000.5,481.4 1001.4,497.8 1002.3,496.5 1003.2,482.3 1004.1,509.0 1005.0,481.1 1005.9,518.7 1006.8,511.0 1007.7,535.3 1008.6,485.6 1009.5,505.2 1010.4,494.2 1011.3,502.4 1012.2,490.6 1013.1,533.7 1014.0,501.4 1014.9,522.3 1015.8,480.6 1016.7,504.8 1017.6,530.1 1018.5,526.2 1019.4,488.0 1020.3,518.3 1021.2,529.9 1022.1,514.4 1023.0,493.5 1023.9,493.1 1024.8,503.5 1025.7,535.0 1026.6,527.9 1027.5,484.0 1028.4,537.3 1029.3,478.5 1030.2,522.5 1031.1,493.5 1032.0,537.1 1032.9,478.6 1033.8,538.1 1034.7,489.5 1035.6,507.7 1036.5,478.1 1037.4,528.8 1038.3,502.4 1039.2,490.6 1040.1,510.9 1041.0,493.4 1041.9,536.9 1042.8,480.1 1043.7,520.6 1044.6,501.4 1045.5,495.8 1046.4,496.9 1047.3,503.9 1048.2,499.4 1049.1,530.5 1050.0,503.9 1050.9,491.4 1051.8,495.8 1052.7,478.6 1053.6,521.1 1054.5,505.9 1055.4,480.7 1056.3,535.5 1057.2,499.3 1058.1,476.6 1059.0,524.2 1059.9,536.1 1060.8,514.0 1061.7,477.5 1062.6,499.6 1063.5,481.4 1064.4,515.8 1065.3,525.3 1066.2,503.5 1067.1,535.5 1068.0,535.3 1068.9,531.8 1069.8,479.2 1070.7,491.7 1071.6,490.7 1072.5,504.2 1073.4,481.9 1074.3,511.7 1075.2,480.0 1076.1,487.8 1077.0,520.1 1077.9,480.8 1078.8,486.2 1079.7,531.3 1080.6,475.2 1081.6,524.3 1082.5,510.0 1083.4,508.6 1084.3,527.6 1085.2,475.2 1086.1,487.6 1087.0,524.0 1087.9,485.5 1088.8,513.1 1089.7,497.4 1090.6,530.0 1091.5,512.4 1092.4,489.1 1093.3,504.2 1094.2,530.2 1095.1,509.0 1096.0,476.2 1096.9,493.1 1097.8,504.6 1098.7,512.6 1099.6,490.0 1100.5,529.9 1101.4,498.6 1102.3,511.2 1103.2,492.8 1104.1,486.5 1105.0,509.8 1105.9,497.8 1106.8,499.2 1107.7,502.2 1108.6,476.7 1109.5,501.3 1110.4,499.4 1111.3,475.4 1112.2,527.5 1113.1,484.0 1114.0,488.9 1114.9,474.2 1115.8,492.3 1116.7,485.1 1117.6,521.4 1118.5,477.1 1119.4,495.5 1120.3,497.4 1121.2,489.4 1122.1,523.5 1123.0,479.6 1123.9,500.3 1124.8,513.8 1125.7,523.9 1126.6,521.6 1127.5,521.1 1128.4,504.4 1129.3,485.1 1130.2,489.8 1131.1,518.1 1132.0,522.2 1132.9,506.6 1133.8,523.3 1134.7,504.6 1135.6,467.8 1136.5,490.0 1137.4,466.9 1138.3,494.4 1139.2,507.7 1140.1,517.6 1141.0,476.4 1141.9,520.3 1142.8,489.8 1143.7,515.7 1144.6,515.7 1145.5,485.7 1146.4,465.5 1147.3,520.6 1148.2,477.6 1149.1,498.7 1150.0,476.7 1150.9,497.7 1151.8,515.1 1152.7,512.7 1153.6,462.7 1154.5,502.2 1155.4,478.5 1156.3,480.0 1157.2,484.0 1158.1,479.8 1159.0,482.1 1159.9,506.0 1160.8,515.4 1161.7,511.1 1162.6,472.0 1163.5,463.6 1164.4,514.9 1165.3,497.1 1166.2,470.7 1167.1,515.8 1168.0,470.3 1168.9,459.7 1169.8,466.8 1170.7,494.5 1171.6,508.8 1172.5,514.7 1173.4,456.1 1174.3,468.3 1175.2,507.1 1176.1,504.7 1177.0,486.6 1177.9,507.3 1178.8,460.4 1179.7,513.2 1180.6,453.5 1181.5,456.6 1182.4,478.5 1183.3,510.2 1184.2,493.6 1185.1,461.3 1186.0,455.8 1186.9,482.7 1187.8,494.7 1188.7,495.8 1189.6,489.0 1190.5,477.5 1191.4,497.8 1192.3,509.3 1193.2,459.7 1194.1,498.1 1195.0,460.4 1195.9,470.1 1196.8,507.8 1197.7,476.3 1198.6,468.2 1199.6,448.0 1200.5,506.7 1201.4,471.1 1202.3,463.0 1203.2,482.7 1204.1,461.5 1205.0,449.3 1205.9,470.1 1206.8,481.0 1207.7,475.7 1208.6,473.5 1209.5,454.9 1210.4,497.4 1211.3,484.3 1212.2,498.5 1213.1,458.7 1214.0,472.6 1214.9,471.8 1215.8,484.2 1216.7,442.6 1217.6,442.3 1218.5,484.4 1219.4,486.0 1220.3,462.9 1221.2,498.3 1222.1,480.8 1223.0,499.4 1223.9,491.4 1224.8,479.0 1225.7,498.9 1226.6,472.6 1227.5,482.4 1228.4,440.1 1229.3,464.4 1230.2,452.1 1231.1,445.0 1232.0,468.5 1232.9,487.8 1233.8,469.6 1234.7,483.6 1235.6,491.4 1236.5,483.4 1237.4,447.3 1238.3,475.5 1239.2,472.7 1240.1,461.5 1241.0,487.4 1241.9,492.3 1242.8,437.5 1243.7,463.2 1244.6,461.2 1245.5,450.1 1246.4,457.9 1247.3,448.5 1248.2,469.7 1249.1,472.8 1250.0,466.9 1250.9,487.9 1251.8,443.1 1252.7,477.8 1253.6,443.0 1254.5,479.5 1255.4,433.6 1256.3,446.1 1257.2,458.0 1258.1,432.6 1259.0,460.2 1259.9,433.4 1260.8,469.2 1261.7,455.8 1262.6,480.4 1263.5,482.5 1264.4,453.5 1265.3,472.5 1266.2,465.5 1267.1,480.6 1268.0,460.7 1268.9,427.2 1269.8,475.0 1270.7,452.4 1271.6,451.3 1272.5,442.2 1273.4,455.1 1274.3,455.6 1275.2,463.6 1276.1,424.2 1277.0,458.0 1277.9,450.1 1278.8,446.5 1279.7,471.3 1280.6,435.7 1281.5,423.9 1282.4,472.2 1283.3,430.7 1284.2,441.4 1285.1,446.3 1286.0,448.1 1286.9,453.7 1287.8,433.5 1288.7,418.3 1289.6,469.9 1290.5,432.9 1291.4,467.6 1292.3,453.0 1293.2,419.5 1294.1,450.0 1295.0,433.3 1295.9,464.3 1296.8,417.1 1297.7,447.8 1298.6,428.2 1299.5,464.1 1300.4,447.7 1301.3,421.7 1302.2,437.2 1303.1,453.0 1304.0,430.6 1304.9,427.7 1305.8,416.7 1306.7,416.7 1307.6,444.2 1308.5,427.2 1309.4,448.2 1310.3,428.1 1311.2,459.9 1312.1,445.7 1313.0,445.1 1313.9,414.3 1314.8,410.9 1315.7,445.9 1316.6,440.4 1317.6,451.1 1318.5,437.3 1319.4,419.2 1320.3,410.4 1321.2,424.4 1322.1,453.6 1323.0,408.1 1323.9,441.0 1324.8,418.2 1325.7,434.5 1326.6,447.4 1327.5,404.4 1328.4,424.6 1329.3,448.8 1330.2,443.6 1331.1,429.3 1332.0,435.5 1332.9,435.7 1333.8,451.8 1334.7,405.1 1335.6,424.3 1336.5,432.2 1337.4,450.6 1338.3,411.7 1339.2,425.5 1340.1,427.3 1341.0,425.0 1341.9,417.9 1342.8,415.8 1343.7,425.4 1344.6,427.2 1345.5,442.5 1346.4,426.1 1347.3,396.0 1348.2,405.5 1349.1,418.3 1350.0,427.7 1350.9,415.3 1351.8,448.0 1352.7,444.7 1353.6,392.9 1354.5,420.7 1355.4,392.0 1356.3,447.3 1357.2,420.6 1358.1,409.6 1359.0,392.6 1359.9,441.6 1360.8,418.2 1361.7,419.0 1362.6,417.3 1363.5,388.6 1364.4,403.8 1365.3,429.4 1366.2,399.2 1367.1,440.0 1368.0,397.1 1368.9,422.9 1369.8,391.2 1370.7,440.6 1371.6,431.5 1372.5,408.0 1373.4,428.5 1374.3,416.5 1375.2,417.8 1376.1,401.8 1377.0,401.4 1377.9,440.0 1378.8,420.9 1379.7,419.6 1380.6,420.8 1381.5,429.2 1382.4,409.4 1383.3,407.5 1384.2,381.5 1385.1,399.1 1386.0,392.3 1386.9,430.2 1387.8,415.8 1388.7,397.2 1389.6,395.1 1390.5,435.3 1391.4,398.3 1392.3,432.7 1393.2,402.3 1394.1,377.1 1395.0,414.5 1395.9,374.7 1396.8,422.3 1397.7,408.4 1398.6,409.4 1399.5,411.6 1400.4,428.3 1401.3,379.3 1402.2,390.5 1403.1,429.4 1404.0,407.7 1404.9,426.7 1405.8,409.5 1406.7,391.6 1407.6,383.7 1408.5,399.5 1409.4,426.4 1410.3,387.4 1411.2,399.5 1412.1,384.3 1413.0,425.1 1413.9,389.0 1414.8,392.8 1415.7,367.4 1416.6,381.3 1417.5,388.0 1418.4,398.0 1419.3,395.9 1420.2,378.4 1421.1,387.7 1422.0,409.1 1422.9,381.1 1423.8,388.2 1424.7,395.4 1425.6,399.0 1426.5,398.0 1427.4,371.3 1428.3,415.2 1429.2,362.1 1430.1,381.0 1431.0,393.2 1431.9,364.2 1432.8,417.8 1433.7,378.5 1434.6,389.6 1435.6,378.8 1436.5,377.1 1437.4,373.3 1438.3,377.9 1439.2,365.7 1440.1,394.8 1441.0,393.1 1441.9,369.5 1442.8,378.5 1443.7,382.6 1444.6,413.8 1445.5,358.9 1446.4,371.6 1447.3,390.6 1448.2,387.7 1449.1,411.7 1450.0,390.1 1450.9,388.4 1451.8,375.5 1452.7,353.4 1453.6,372.2 1454.5,386.3 1455.4,390.1 1456.3,352.7 1457.2,389.1 1458.1,351.2 1459.0,389.0 1459.9,369.0 1460.8,364.8 1461.7,407.2 1462.6,355.2 1463.5,404.5 1464.4,355.0 1465.3,405.1 1466.2,353.7 1467.1,371.8 1468.0,378.1 1468.9,356.4 1469.8,404.7 1470.7,348.1 1471.6,404.5 1472.5,386.7 1473.4,401.8 1474.3,380.3 1475.2,344.3 1476.1,400.5 1477.0,380.0 1477.9,392.5 1478.8,352.1 1479.7,380.9 1480.6,388.2 1481.5,401.5 1482.4,340.7 1483.3,354.3 1484.2,382.8 1485.1,371.0 1486.0,375.0 1486.9,340.5 1487.8,377.6 1488.7,347.5 1489.6,371.4 1490.5,390.6 1491.4,381.0 1492.3,385.1 1493.2,384.6 1494.1,363.1 1495.0,386.8 1495.9,391.6 1496.8,369.5 1497.7,362.1 1498.6,344.6 1499.5,335.2 1500.4,350.2 1501.3,347.3 1502.2,333.9 1503.1,377.7 1504.0,371.7 1504.9,377.6 1505.8,350.8 1506.7,393.2 1507.6,377.7 1508.5,379.1 1509.4,371.8 1510.3,335.1 1511.2,361.1 1512.1,349.8 1513.0,333.3 1513.9,388.1 1514.8,353.8 1515.7,341.7 1516.6,331.0 1517.5,354.4 1518.4,346.1 1519.3,339.1 1520.2,380.5 1521.1,385.4 1522.0,350.3 1522.9,385.0 1523.8,329.7 1524.7,355.7 1525.6,371.0 1526.5,377.2 1527.4,329.0 1528.3,379.0 1529.2,353.4 1530.1,362.2 1531.0,354.5 1531.9,353.7 1532.8,349.4 1533.7,327.8 1534.6,368.8 1535.5,362.3 1536.4,349.4 1537.3,381.0 1538.2,380.3 1539.1,331.2 1540.0,364.8 1540.9,326.8 1541.8,329.2 1542.7,331.1 1543.6,342.4 1544.5,326.7 1545.4,356.8 1546.3,349.6 1547.2,346.4 1548.1,347.1 1549.0,377.1 1549.9,324.8 1550.8,374.7 1551.7,344.7 1552.7,373.6 1553.6,360.8 1554.5,327.4 1555.4,375.6 1556.3,347.1 1557.2,349.2 1558.1,346.3 1559.0,375.8 1559.9,359.3 1560.8,348.4 1561.7,327.1 1562.6,359.8 1563.5,331.1 1564.4,322.9 1565.3,352.7 1566.2,329.0 1567.1,348.4 1568.0,333.9 1568.9,320.4 1569.8,339.8 1570.7,349.3 1571.6,351.9 1572.5,357.7 1573.4,330.9 1574.3,371.5 1575.2,323.1 1576.1,351.7 1577.0,337.5 1577.9,357.4 1578.8,362.4 1579.7,371.0 1580.6,371.1 1581.5,319.2 1582.4,328.1 1583.3,366.5 1584.2,365.7 1585.1,345.3 1586.0,370.5 1586.9,334.6 1587.8,346.7 1588.7,364.0 1589.6,349.6 1590.5,321.7 1591.4,339.3 1592.3,342.5 1593.2,338.8 1594.1,349.7 1595.0,367.9 1595.9,342.8 1596.8,344.7 1597.7,328.9 1598.6,329.8 1599.5,321.3 1600.4,339.1 1601.3,362.2 1602.2,331.0 1603.1,332.3 1604.0,320.5 1604.9,351.5 1605.8,346.4 1606.7,334.4 1607.6,335.7 1608.5,322.0 1609.4,331.1 1610.3,315.6 1611.2,331.2 1612.1,309.5 1613.0,342.2 1613.9,321.5 1614.8,314.8 1615.7,337.6 1616.6,352.7 1617.5,341.9 1618.4,312.7 1619.3,310.1 1620.2,344.0 1621.1,319.4 1622.0,361.9 1622.9,333.5 1623.8,325.4 1624.7,319.0 1625.6,347.8 1626.5,321.4 1627.4,335.8 1628.3,310.4 1629.2,350.5 1630.1,307.2 1631.0,331.5 1631.9,349.8 1632.8,325.7 1633.7,329.3 1634.6,328.5 1635.5,321.6 1636.4,325.4 1637.3,359.5 1638.2,317.2 1639.1,357.6 1640.0,313.2 1640.9,358.9 1641.8,307.3 1642.7,358.5 1643.6,346.7 1644.5,315.1 1645.4,358.9 1646.3,326.6 1647.2,354.2 1648.1,325.8 1649.0,326.9 1649.9,336.4 1650.8,342.1 1651.7,312.7 1652.6,340.1 1653.5,358.5 1654.4,331.7 1655.3,354.2 1656.2,311.1 1657.1,323.5 1658.0,308.3 1658.9,353.2 1659.8,316.0 1660.7,313.4 1661.6,342.4 1662.5,309.2 1663.4,321.6 1664.3,307.8 1665.2,339.3 1666.1,331.7 1667.0,358.5 1667.9,335.3 1668.8,344.9 1669.7,340.9 1670.7,333.7 1671.6,304.1 1672.5,319.6 1673.4,358.2 1674.3,326.5 1675.2,357.1 1676.1,339.4 1677.0,346.2 1677.9,355.5 1678.8,318.3 1679.7,309.7 1680.6,332.7 1681.5,357.8 1682.4,345.1 1683.3,344.1 1684.2,344.3 1685.1,323.1 1686.0,352.3 1686.9,335.7 1687.8,357.5 1688.7,329.3 1689.6,319.9 1690.5,344.2 1691.4,352.6 1692.3,336.4 1693.2,325.0 1694.1,335.3" fill="none" stroke="#73bf69" stroke-width="1.7" stroke-linejoin="round"/>
<rect x="938.5" y="615" width="21" height="6" rx="1.5" fill="#73bf69"/>
<text x="971.80" y="623.2" font-size="18" fill="#ccccdc" font-weight="normal" textLength="72.53" lengthAdjust="spacingAndGlyphs" >Humidity</text>
<rect x="1728.75" y="201.9" width="798.5" height="442.35" rx="3" fill="#181b1f" stroke="#24272c" stroke-width="1.5"/>
<text x="2045.51" y="234.4" font-size="20" fill="#d2d3de" font-weight="normal" textLength="164.81" lengthAdjust="spacingAndGlyphs" stroke="#d2d3de" stroke-width="0.7">Device-2 - battery</text>
<rect x="1799" y="275" width="703" height="236.7" fill="#25322a"/>
<rect x="1799" y="511.7" width="703" height="53.3" fill="#3a2128"/>
<rect x="1818.25" y="275" width="1.5" height="295" fill="rgba(204,204,220,0.085)"/>
<text x="1797.05" y="592.5" font-size="18" fill="#c7c7d1" font-weight="normal" textLength="43.96" lengthAdjust="spacingAndGlyphs" >14:00</text>
<rect x="1935.45" y="275" width="1.5" height="295" fill="rgba(204,204,220,0.085)"/>
<text x="1914.25" y="592.5" font-size="18" fill="#c7c7d1" font-weight="normal" textLength="43.96" lengthAdjust="spacingAndGlyphs" >15:00</text>
<rect x="2052.65" y="275" width="1.5" height="295" fill="rgba(204,204,220,0.085)"/>
<text x="2031.45" y="592.5" font-size="18" fill="#c7c7d1" font-weight="normal" textLength="43.96" lengthAdjust="spacingAndGlyphs" >16:00</text>
<rect x="2169.85" y="275" width="1.5" height="295" fill="rgba(204,204,220,0.085)"/>
<text x="2148.65" y="592.5" font-size="18" fill="#c7c7d1" font-weight="normal" textLength="43.96" lengthAdjust="spacingAndGlyphs" >17:00</text>
<rect x="2287.05" y="275" width="1.5" height="295" fill="rgba(204,204,220,0.085)"/>
<text x="2265.85" y="592.5" font-size="18" fill="#c7c7d1" font-weight="normal" textLength="43.96" lengthAdjust="spacingAndGlyphs" >18:00</text>
<rect x="2404.25" y="275" width="1.5" height="295" fill="rgba(204,204,220,0.085)"/>
<text x="2383.05" y="592.5" font-size="18" fill="#c7c7d1" font-weight="normal" textLength="43.96" lengthAdjust="spacingAndGlyphs" >19:00</text>
<rect x="1794" y="564.25" width="708" height="1.5" fill="rgba(204,204,220,0.085)"/>
<text x="1761.28" y="570.1" font-size="18" fill="#c7c7d1" font-weight="normal" textLength="23.93" lengthAdjust="spacingAndGlyphs" >0%</text>
<rect x="1794" y="511.45" width="708" height="1.5" fill="rgba(204,204,220,0.085)"/>
<text x="1752.08" y="517.3000000000001" font-size="18" fill="#c7c7d1" font-weight="normal" textLength="33.15" lengthAdjust="spacingAndGlyphs" >20%</text>
<rect x="1794" y="458.65" width="708" height="1.5" fill="rgba(204,204,220,0.085)"/>
<text x="1752.08" y="464.5" font-size="18" fill="#c7c7d1" font-weight="normal" textLength="33.15" lengthAdjust="spacingAndGlyphs" >40%</text>
<rect x="1794" y="405.85" width="708" height="1.5" fill="rgba(204,204,220,0.085)"/>
<text x="1752.08" y="411.70000000000005" font-size="18" fill="#c7c7d1" font-weight="normal" textLength="33.15" lengthAdjust="spacingAndGlyphs" >60%</text>
<rect x="1794" y="353.05" width="708" height="1.5" fill="rgba(204,204,220,0.085)"/>
<text x="1752.08" y="358.9" font-size="18" fill="#c7c7d1" font-weight="normal" textLength="33.15" lengthAdjust="spacingAndGlyphs" >80%</text>
<rect x="1794" y="300.25" width="708" height="1.5" fill="rgba(204,204,220,0.085)"/>
<text x="1742.88" y="306.1" font-size="18" fill="#c7c7d1" font-weight="normal" textLength="42.36" lengthAdjust="spacingAndGlyphs" >100%</text>
<line x1="1799" y1="511.7" x2="2502" y2="511.7" stroke="#73bf69" stroke-width="1.8" stroke-dasharray="10,10" opacity="0.9"/>
<polyline points="1799.7,565.0 2053.4,565.0 2287.8,301.0 2502.3,301.0" fill="none" stroke="#73bf69" stroke-width="2" stroke-linejoin="round"/>
<rect x="1747.5" y="615" width="21" height="6" rx="1.5" fill="#73bf69"/>
<text x="1780.80" y="623.2" font-size="18" fill="#ccccdc" font-weight="normal" textLength="57.13" lengthAdjust="spacingAndGlyphs" >Battery</text>
<path d="M126.4 678.4 l4.4 4.4 l4.4 -4.4" fill="none" stroke="#ccccdc" stroke-width="2" stroke-linecap="round" stroke-linejoin="round"/>
<text x="143.60" y="686.8" font-size="22.6" fill="#d4d5e0" font-weight="bold" textLength="93.74" lengthAdjust="spacingAndGlyphs" >Device-3</text>
<rect x="110.75" y="714.9" width="799.5" height="442.35" rx="3" fill="#181b1f" stroke="#24272c" stroke-width="1.5"/>
<text x="404.44" y="747.4" font-size="20" fill="#d2d3de" font-weight="normal" textLength="211.63" lengthAdjust="spacingAndGlyphs" stroke="#d2d3de" stroke-width="0.7">Device-3 - temperature</text>
<rect x="199.95" y="788" width="1.5" height="296" fill="rgba(204,204,220,0.085)"/>
<text x="178.75" y="1105.5" font-size="18" fill="#c7c7d1" font-weight="normal" textLength="43.96" lengthAdjust="spacingAndGlyphs" >14:00</text>
<rect x="317.45" y="788" width="1.5" height="296" fill="rgba(204,204,220,0.085)"/>
<text x="296.25" y="1105.5" font-size="18" fill="#c7c7d1" font-weight="normal" textLength="43.96" lengthAdjust="spacingAndGlyphs" >15:00</text>
<rect x="434.95" y="788" width="1.5" height="296" fill="rgba(204,204,220,0.085)"/>
<text x="413.75" y="1105.5" font-size="18" fill="#c7c7d1" font-weight="normal" textLength="43.96" lengthAdjust="spacingAndGlyphs" >16:00</text>
<rect x="552.45" y="788" width="1.5" height="296" fill="rgba(204,204,220,0.085)"/>
<text x="531.25" y="1105.5" font-size="18" fill="#c7c7d1" font-weight="normal" textLength="43.96" lengthAdjust="spacingAndGlyphs" >17:00</text>
<rect x="669.95" y="788" width="1.5" height="296" fill="rgba(204,204,220,0.085)"/>
<text x="648.75" y="1105.5" font-size="18" fill="#c7c7d1" font-weight="normal" textLength="43.96" lengthAdjust="spacingAndGlyphs" >18:00</text>
<rect x="787.45" y="788" width="1.5" height="296" fill="rgba(204,204,220,0.085)"/>
<text x="766.25" y="1105.5" font-size="18" fill="#c7c7d1" font-weight="normal" textLength="43.96" lengthAdjust="spacingAndGlyphs" >19:00</text>
<rect x="175.6" y="812.65" width="710.1" height="1.5" fill="rgba(204,204,220,0.085)"/>
<text x="122.42" y="818.6999999999999" font-size="18" fill="#c7c7d1" font-weight="normal" textLength="44.10" lengthAdjust="spacingAndGlyphs" >24 °C</text>
<rect x="175.6" y="897.85" width="710.1" height="1.5" fill="rgba(204,204,220,0.085)"/>
<text x="122.42" y="903.8999999999999" font-size="18" fill="#c7c7d1" font-weight="normal" textLength="44.10" lengthAdjust="spacingAndGlyphs" >22 °C</text>
<rect x="175.6" y="983.05" width="710.1" height="1.5" fill="rgba(204,204,220,0.085)"/>
<text x="122.42" y="989.0999999999999" font-size="18" fill="#c7c7d1" font-weight="normal" textLength="44.10" lengthAdjust="spacingAndGlyphs" >20 °C</text>
<rect x="175.6" y="1068.25" width="710.1" height="1.5" fill="rgba(204,204,220,0.085)"/>
<text x="122.42" y="1074.3" font-size="18" fill="#c7c7d1" font-weight="normal" textLength="44.10" lengthAdjust="spacingAndGlyphs" >18 °C</text>
<clipPath id="cp3"><rect x="170.6" y="775" width="719.4" height="314"/></clipPath>
<polyline clip-path="url(#cp3)" points="181.3,1022.5 182.2,1040.9 183.1,1035.3 184.0,1031.1 184.9,1035.0 185.8,1041.4 186.7,1022.8 187.6,1029.3 188.5,1026.3 189.4,1039.9 190.3,1012.0 191.2,1033.9 192.1,1022.2 193.0,1025.8 193.9,1017.0 194.8,1012.4 195.7,1019.1 196.6,1006.8 197.5,1002.5 198.4,1018.0 199.3,1008.7 200.2,1018.0 201.1,1003.1 202.0,1002.4 202.9,1035.6 203.8,1032.1 204.7,1026.3 205.6,1012.6 206.5,1013.1 207.4,1012.1 208.3,1014.8 209.2,1031.5 210.1,1012.6 211.0,1028.4 211.9,1001.2 212.8,1035.0 213.7,1017.4 214.6,1013.9 215.5,1008.6 216.4,1027.2 217.3,1023.5 218.2,1002.2 219.1,1009.9 220.0,1025.6 220.9,1014.1 221.8,1010.0 222.7,1001.1 223.6,1035.0 224.6,1011.0 225.5,1012.3 226.4,1012.0 227.3,1034.2 228.2,1031.3 229.1,1003.5 230.0,1021.3 230.9,1008.3 231.8,1011.6 232.7,1024.3 233.6,998.1 234.5,998.2 235.4,1032.6 236.3,1008.4 237.2,1023.6 238.1,1014.8 239.0,1013.0 239.9,1002.9 240.8,1020.8 241.7,1016.2 242.6,1031.0 243.5,1015.7 244.4,1027.5 245.3,1021.1 246.2,1029.7 247.1,1027.7 248.0,1034.2 248.9,1031.9 249.8,1025.2 250.7,1038.5 251.6,1015.8 252.5,1025.5 253.4,1036.7 254.3,1025.6 255.2,1014.5 256.1,1048.3 257.0,1041.9 257.9,1044.5 258.8,1037.2 259.7,1028.6 260.6,1047.5 261.5,1049.2 262.4,1045.0 263.3,1021.4 264.2,1012.5 265.1,1049.0 266.0,1031.7 266.9,1031.8 267.8,1042.5 268.7,1034.5 269.6,1049.2 270.5,1048.7 271.4,1020.9 272.3,1033.9 273.2,1046.3 274.1,1024.8 275.0,1022.2 275.9,1031.1 276.8,1031.4 277.7,1039.8 278.6,1028.0 279.5,1018.2 280.4,1037.4 281.3,1015.4 282.2,1038.9 283.1,1010.0 284.0,1041.2 284.9,1016.1 285.8,1022.6 286.7,1044.3 287.6,1011.0 288.5,1030.0 289.4,1023.1 290.3,1041.5 291.2,1023.8 292.1,1043.5 293.0,1030.5 293.9,1027.8 294.8,1034.4 295.7,1034.5 296.6,1018.5 297.5,1036.7 298.4,1011.6 299.3,1026.9 300.2,1038.1 301.1,1042.6 302.0,1030.6 302.9,1019.8 303.8,1003.8 304.7,1042.6 305.6,1007.3 306.5,1042.7 307.4,1001.7 308.3,1005.1 309.2,1018.2 310.1,1003.9 311.0,1028.0 311.9,1030.9 312.8,1003.9 313.7,1008.8 314.6,1038.1 315.5,1010.4 316.4,1016.7 317.3,1013.9 318.2,1001.5 319.1,1022.2 320.0,1011.7 320.9,1008.5 321.8,998.6 322.7,1004.5 323.6,1032.5 324.5,1021.3 325.4,1030.7 326.3,1030.2 327.2,1005.7 328.1,1013.9 329.0,1034.4 329.9,1027.8 330.8,1026.9 331.7,1023.5 332.6,999.3 333.5,1031.7 334.4,1000.7 335.3,1009.9 336.2,1035.1 337.1,1017.9 338.0,994.4 338.9,1009.8 339.9,1028.5 340.8,1007.7 341.7,1021.6 342.6,1034.3 343.5,1003.2 344.4,1022.1 345.3,1008.1 346.2,1012.8 347.1,1027.6 348.0,1011.0 348.9,1002.1 349.8,1033.2 350.7,1020.6 351.6,993.5 352.5,1009.8 353.4,1017.3 354.3,1006.3 355.2,991.6 356.1,1032.0 357.0,989.9 357.9,1030.7 358.8,1017.8 359.7,1022.0 360.6,991.5 361.5,1006.6 362.4,1001.6 363.3,1005.2 364.2,1022.7 365.1,988.9 366.0,1010.8 366.9,1003.4 367.8,1027.5 368.7,995.3 369.6,1009.4 370.5,1024.1 371.4,1003.9 372.3,1018.6 373.2,1020.1 374.1,1026.2 375.0,1010.7 375.9,992.3 376.8,1025.2 377.7,1005.7 378.6,994.0 379.5,983.8 380.4,1000.4 381.3,1002.9 382.2,994.3 383.1,988.1 384.0,1023.4 384.9,982.5 385.8,1023.3 386.7,987.9 387.6,980.9 388.5,1023.9 389.4,990.4 390.3,983.4 391.2,1011.9 392.1,998.2 393.0,980.1 393.9,979.3 394.8,978.8 395.7,1000.3 396.6,981.2 397.5,999.6 398.4,1002.9 399.3,1003.8 400.2,993.0 401.1,1006.8 402.0,1019.6 402.9,982.7 403.8,999.7 404.7,1013.2 405.6,990.3 406.5,1006.8 407.4,999.1 408.3,993.2 409.2,998.6 410.1,1014.0 411.0,1015.4 411.9,996.0 412.8,985.1 413.7,1000.3 414.6,1012.4 415.5,1014.9 416.4,988.4 417.3,1013.7 418.2,976.8 419.1,1011.1 420.0,976.8 420.9,973.5 421.8,975.0 422.7,992.3 423.6,1011.3 424.5,1009.8 425.4,974.7 426.3,970.1 427.2,1011.5 428.1,1008.1 429.0,1010.8 429.9,970.1 430.8,1005.5 431.7,966.3 432.6,994.6 433.5,966.3 434.4,1007.0 435.3,1008.8 436.2,996.1 437.1,996.0 438.0,995.9 438.9,972.5 439.8,1004.6 440.7,966.0 441.6,984.3 442.5,963.2 443.4,987.9 444.3,989.8 445.2,989.5 446.1,963.9 447.0,962.8 447.9,983.6 448.8,978.1 449.7,973.6 450.6,978.2 451.5,967.7 452.4,959.8 453.3,964.6 454.2,985.1 455.2,995.7 456.1,959.8 457.0,978.7 457.9,976.4 458.8,982.5 459.7,973.5 460.6,991.4 461.5,978.2 462.4,971.6 463.3,987.1 464.2,956.5 465.1,957.5 466.0,973.0 466.9,977.1 467.8,996.0 468.7,954.7 469.6,983.0 470.5,983.9 471.4,956.6 472.3,962.4 473.2,969.3 474.1,968.7 475.0,953.6 475.9,987.6 476.8,981.8 477.7,980.5 478.6,981.3 479.5,974.6 480.4,963.3 481.3,962.6 482.2,957.3 483.1,989.3 484.0,987.4 484.9,988.5 485.8,953.0 486.7,955.4 487.6,949.8 488.5,987.8 489.4,955.5 490.3,953.3 491.2,958.4 492.1,979.3 493.0,978.6 493.9,954.7 494.8,975.1 495.7,963.5 496.6,963.2 497.5,945.2 498.4,964.2 499.3,952.4 500.2,967.4 501.1,944.3 502.0,975.3 502.9,958.9 503.8,970.6 504.7,944.6 505.6,980.4 506.5,979.5 507.4,972.2 508.3,962.8 509.2,964.9 510.1,974.5 511.0,956.8 511.9,978.2 512.8,957.4 513.7,941.2 514.6,964.2 515.5,977.1 516.4,960.0 517.3,947.0 518.2,958.1 519.1,957.6 520.0,976.9 520.9,978.3 521.8,946.6 522.7,975.0 523.6,938.9 524.5,977.7 525.4,935.8 526.3,936.4 527.2,948.0 528.1,934.4 529.0,947.7 529.9,937.2 530.8,936.5 531.7,957.8 532.6,973.8 533.5,957.9 534.4,958.6 535.3,952.8 536.2,974.7 537.1,967.2 538.0,931.2 538.9,946.9 539.8,957.7 540.7,947.1 541.6,929.8 542.5,951.5 543.4,963.2 544.3,934.1 545.2,953.4 546.1,931.1 547.0,936.2 547.9,959.0 548.8,945.4 549.7,927.6 550.6,927.8 551.5,934.9 552.4,954.6 553.3,956.1 554.2,954.8 555.1,928.5 556.0,940.2 556.9,961.4 557.8,955.0 558.7,930.5 559.6,943.2 560.5,948.5 561.4,931.5 562.3,945.2 563.2,957.4 564.1,961.5 565.0,935.2 565.9,944.2 566.8,959.7 567.7,925.8 568.6,934.4 569.6,927.2 570.5,957.1 571.4,954.1 572.3,920.4 573.2,948.4 574.1,926.0 575.0,937.7 575.9,959.2 576.8,939.8 577.7,941.0 578.6,937.4 579.5,956.1 580.4,917.5 581.3,943.7 582.2,949.2 583.1,927.1 584.0,931.8 584.9,914.8 585.8,938.9 586.7,937.7 587.6,915.4 588.5,940.4 589.4,947.3 590.3,953.9 591.2,934.4 592.1,936.3 593.0,934.3 593.9,928.0 594.8,939.7 595.7,935.2 596.6,930.0 597.5,945.7 598.4,954.6 599.3,909.1 600.2,920.9 601.1,908.5 602.0,954.3 602.9,910.0 603.8,909.9 604.7,918.4 605.6,933.7 606.5,951.4 607.4,952.5 608.3,905.1 609.2,931.4 610.1,905.6 611.0,943.6 611.9,926.2 612.8,918.5 613.7,911.3 614.6,919.9 615.5,934.3 616.4,930.3 617.3,927.5 618.2,931.3 619.1,940.9 620.0,929.0 620.9,946.2 621.8,919.9 622.7,899.1 623.6,906.5 624.5,939.6 625.4,933.1 626.3,933.6 627.2,924.7 628.1,909.4 629.0,921.3 629.9,914.8 630.8,897.2 631.7,922.2 632.6,944.3 633.5,916.4 634.4,909.5 635.3,922.1 636.2,918.3 637.1,937.6 638.0,908.7 638.9,950.4 639.8,933.6 640.7,937.6 641.6,950.8 642.5,950.9 643.4,923.2 644.3,927.6 645.2,942.4 646.1,931.0 647.0,916.5 647.9,942.0 648.8,934.2 649.7,918.1 650.6,912.8 651.5,920.0 652.4,931.9 653.3,925.5 654.2,909.1 655.1,926.9 656.0,927.4 656.9,907.0 657.8,927.9 658.7,925.0 659.6,930.8 660.5,915.3 661.4,914.3 662.3,936.2 663.2,907.5 664.1,936.5 665.0,902.8 665.9,933.8 666.8,913.7 667.7,903.9 668.6,938.4 669.5,936.4 670.4,918.7 671.3,901.4 672.2,916.4 673.1,914.3 674.0,935.9 674.9,917.7 675.8,911.3 676.7,934.4 677.6,898.7 678.5,896.8 679.4,923.6 680.3,915.4 681.2,898.4 682.1,897.9 683.0,926.7 683.9,919.6 684.9,894.3 685.8,917.3 686.7,919.8 687.6,928.9 688.5,916.5 689.4,928.3 690.3,895.7 691.2,921.4 692.1,903.3 693.0,925.5 693.9,903.5 694.8,926.2 695.7,903.5 696.6,924.7 697.5,902.1 698.4,910.1 699.3,889.4 700.2,896.1 701.1,921.6 702.0,905.1 702.9,909.5 703.8,923.1 704.7,893.6 705.6,916.9 706.5,905.0 707.4,913.1 708.3,884.2 709.2,897.3 710.1,884.3 711.0,895.1 711.9,892.0 712.8,893.3 713.7,913.5 714.6,882.1 715.5,888.8 716.4,881.0 717.3,909.8 718.2,895.7 719.1,917.0 720.0,882.2 720.9,897.1 721.8,894.2 722.7,892.2 723.6,914.5 724.5,877.9 725.4,914.0 726.3,885.8 727.2,876.5 728.1,898.3 729.0,884.2 729.9,912.3 730.8,897.8 731.7,889.4 732.6,892.6 733.5,874.4 734.4,877.6 735.3,889.8 736.2,906.7 737.1,888.9 738.0,894.9 738.9,891.6 739.8,873.4 740.7,895.1 741.6,870.5 742.5,898.1 743.4,880.5 744.3,905.8 745.2,886.7 746.1,891.9 747.0,904.4 747.9,904.0 748.8,887.9 749.7,869.4 750.6,880.4 751.5,873.4 752.4,879.9 753.3,875.0 754.2,876.3 755.1,894.4 756.0,867.9 756.9,868.3 757.8,863.9 758.7,890.3 759.6,873.8 760.5,871.8 761.4,888.0 762.3,871.7 763.2,897.5 764.1,861.8 765.0,880.9 765.9,882.5 766.8,868.2 767.7,868.8 768.6,879.7 769.5,888.4 770.4,858.8 771.3,859.3 772.2,878.7 773.1,892.2 774.0,883.7 774.9,860.3 775.8,871.7 776.7,888.3 777.6,882.0 778.5,855.5 779.4,882.2 780.3,885.8 781.2,879.9 782.1,863.9 783.0,857.2 783.9,878.3 784.8,871.8 785.7,885.6 786.6,853.8 787.5,852.1 788.4,872.8 789.3,851.3 790.2,856.7 791.1,874.4 792.0,877.4 792.9,872.1 793.8,858.1 794.7,865.8 795.6,849.3 796.5,882.2 797.4,872.5 798.3,848.1 799.2,867.9 800.2,881.7 801.1,865.1 802.0,871.4 802.9,846.0 803.8,878.9 804.7,877.0 805.6,845.5 806.5,847.4 807.4,878.5 808.3,856.8 809.2,847.2 810.1,859.0 811.0,864.3 811.9,843.3 812.8,854.4 813.7,844.6 814.6,856.4 815.5,868.6 816.4,845.9 817.3,841.4 818.2,840.0 819.1,858.8 820.0,863.9 820.9,855.7 821.8,839.6 822.7,847.2 823.6,864.2 824.5,872.0 825.4,858.6 826.3,868.8 827.2,870.6 828.1,843.6 829.0,843.1 829.9,854.8 830.8,834.9 831.7,845.4 832.6,845.1 833.5,836.7 834.4,841.2 835.3,867.3 836.2,846.8 837.1,849.1 838.0,865.7 838.9,858.1 839.8,864.7 840.7,856.8 841.6,847.4 842.5,845.7 843.4,828.8 844.3,860.1 845.2,862.5 846.1,855.0 847.0,834.3 847.9,856.5 848.8,838.8 849.7,845.2 850.6,849.6 851.5,838.3 852.4,848.5 853.3,839.6 854.2,832.2 855.1,857.3 856.0,833.0 856.9,842.9 857.8,850.1 858.7,832.4 859.6,829.7 860.5,842.6 861.4,837.5 862.3,852.7 863.2,820.2 864.1,850.9 865.0,831.3 865.9,841.0 866.8,826.1 867.7,840.7 868.6,839.1 869.5,840.3 870.4,843.1 871.3,833.1 872.2,835.0 873.1,848.5 874.0,834.0 874.9,847.1 875.8,847.0 876.7,835.0 877.6,844.1 878.5,839.2 879.4,841.5 880.3,823.9 881.2,837.3 882.1,837.1 883.0,831.9 883.9,827.4 884.8,826.2 885.7,825.9" fill="none" stroke="#73bf69" stroke-width="1.7" stroke-linejoin="round"/>
<rect x="129.5" y="1128" width="21" height="6" rx="1.5" fill="#73bf69"/>
<text x="162.80" y="1136.2" font-size="18" fill="#ccccdc" font-weight="normal" textLength="102.29" lengthAdjust="spacingAndGlyphs" >Temperature</text>
<rect x="919.75" y="714.9" width="799.5" height="442.35" rx="3" fill="#181b1f" stroke="#24272c" stroke-width="1.5"/>
<text x="1229.16" y="747.4" font-size="20" fill="#d2d3de" font-weight="normal" textLength="180.85" lengthAdjust="spacingAndGlyphs" stroke="#d2d3de" stroke-width="0.7">Device-3 - humidity</text>
<rect x="999.55" y="788" width="1.5" height="296" fill="rgba(204,204,220,0.085)"/>
<text x="978.35" y="1105.5" font-size="18" fill="#c7c7d1" font-weight="normal" textLength="43.96" lengthAdjust="spacingAndGlyphs" >14:00</text>
<rect x="1118.55" y="788" width="1.5" height="296" fill="rgba(204,204,220,0.085)"/>
<text x="1097.35" y="1105.5" font-size="18" fill="#c7c7d1" font-weight="normal" textLength="43.96" lengthAdjust="spacingAndGlyphs" >15:00</text>
<rect x="1237.55" y="788" width="1.5" height="296" fill="rgba(204,204,220,0.085)"/>
<text x="1216.35" y="1105.5" font-size="18" fill="#c7c7d1" font-weight="normal" textLength="43.96" lengthAdjust="spacingAndGlyphs" >16:00</text>
<rect x="1356.55" y="788" width="1.5" height="296" fill="rgba(204,204,220,0.085)"/>
<text x="1335.35" y="1105.5" font-size="18" fill="#c7c7d1" font-weight="normal" textLength="43.96" lengthAdjust="spacingAndGlyphs" >17:00</text>
<rect x="1475.55" y="788" width="1.5" height="296" fill="rgba(204,204,220,0.085)"/>
<text x="1454.35" y="1105.5" font-size="18" fill="#c7c7d1" font-weight="normal" textLength="43.96" lengthAdjust="spacingAndGlyphs" >18:00</text>
<rect x="1594.55" y="788" width="1.5" height="296" fill="rgba(204,204,220,0.085)"/>
<text x="1573.35" y="1105.5" font-size="18" fill="#c7c7d1" font-weight="normal" textLength="43.96" lengthAdjust="spacingAndGlyphs" >19:00</text>
<rect x="975" y="827.15" width="719.5" height="1.5" fill="rgba(204,204,220,0.085)"/>
<text x="932.38" y="833.1999999999999" font-size="18" fill="#c7c7d1" font-weight="normal" textLength="33.15" lengthAdjust="spacingAndGlyphs" >80%</text>
<rect x="975" y="907.35" width="719.5" height="1.5" fill="rgba(204,204,220,0.085)"/>
<text x="932.38" y="913.4" font-size="18" fill="#c7c7d1" font-weight="normal" textLength="33.15" lengthAdjust="spacingAndGlyphs" >70%</text>
<rect x="975" y="987.55" width="719.5" height="1.5" fill="rgba(204,204,220,0.085)"/>
<text x="932.38" y="993.5999999999999" font-size="18" fill="#c7c7d1" font-weight="normal" textLength="33.15" lengthAdjust="spacingAndGlyphs" >60%</text>
<rect x="975" y="1067.75" width="719.5" height="1.5" fill="rgba(204,204,220,0.085)"/>
<text x="932.38" y="1073.8" font-size="18" fill="#c7c7d1" font-weight="normal" textLength="33.15" lengthAdjust="spacingAndGlyphs" >50%</text>
<clipPath id="cp4"><rect x="970" y="775" width="730" height="314"/></clipPath>
<polyline clip-path="url(#cp4)" points="980.7,946.2 981.6,933.3 982.5,938.6 983.4,928.0 984.3,899.5 985.2,888.2 986.1,944.6 987.0,899.6 987.9,949.8 988.8,932.8 989.7,952.6 990.6,917.8 991.5,949.8 992.4,895.3 993.3,913.6 994.2,945.4 995.1,910.5 996.0,879.4 996.9,940.6 997.8,930.0 998.7,895.7 999.6,915.3 1000.5,895.3 1001.4,876.7 1002.3,922.0 1003.2,936.7 1004.1,940.9 1005.0,918.7 1005.9,874.2 1006.8,901.3 1007.7,898.0 1008.6,928.6 1009.5,875.5 1010.4,939.6 1011.3,921.2 1012.2,883.0 1013.1,934.6 1014.0,923.9 1014.9,888.0 1015.8,910.7 1016.7,936.4 1017.6,879.9 1018.5,908.5 1019.4,906.0 1020.3,905.7 1021.2,932.6 1022.1,935.0 1023.0,891.7 1023.9,877.3 1024.8,867.3 1025.7,865.0 1026.6,903.2 1027.5,931.9 1028.4,914.1 1029.3,880.8 1030.2,934.0 1031.1,863.3 1032.0,927.5 1032.9,913.6 1033.8,884.8 1034.7,904.1 1035.6,894.3 1036.5,906.7 1037.4,910.7 1038.3,878.9 1039.2,863.5 1040.1,895.1 1041.0,891.2 1041.9,893.0 1042.8,928.0 1043.7,858.3 1044.6,874.8 1045.5,876.7 1046.4,887.0 1047.3,875.8 1048.2,857.8 1049.1,916.0 1050.0,870.3 1050.9,888.9 1051.8,923.6 1052.7,870.9 1053.6,868.5 1054.5,886.1 1055.4,885.4 1056.3,896.5 1057.2,915.5 1058.1,859.8 1059.0,899.8 1059.9,926.4 1060.8,902.3 1061.7,863.5 1062.6,912.5 1063.5,849.3 1064.4,901.3 1065.3,900.8 1066.2,924.3 1067.1,873.6 1068.0,911.2 1068.9,923.3 1069.8,904.8 1070.7,870.1 1071.6,885.3 1072.5,914.9 1073.4,900.0 1074.3,900.4 1075.2,844.2 1076.1,914.0 1077.0,842.8 1077.9,893.3 1078.8,872.7 1079.7,872.5 1080.6,901.7 1081.6,855.7 1082.5,871.7 1083.4,907.3 1084.3,840.7 1085.2,839.0 1086.1,842.8 1087.0,916.7 1087.9,869.0 1088.8,901.7 1089.7,838.6 1090.6,909.8 1091.5,852.5 1092.4,905.9 1093.3,855.5 1094.2,862.4 1095.1,840.1 1096.0,858.0 1096.9,869.7 1097.8,868.9 1098.7,858.9 1099.6,849.2 1100.5,834.3 1101.4,851.7 1102.3,908.8 1103.2,888.4 1104.1,838.0 1105.0,871.9 1105.9,874.5 1106.8,858.1 1107.7,832.8 1108.6,841.7 1109.5,849.4 1110.4,859.9 1111.3,887.0 1112.2,839.8 1113.1,833.8 1114.0,889.1 1114.9,866.8 1115.8,869.5 1116.7,849.2 1117.6,855.0 1118.5,900.5 1119.4,869.6 1120.3,875.2 1121.2,885.4 1122.1,861.6 1123.0,894.5 1123.9,901.5 1124.8,830.3 1125.7,866.5 1126.6,882.5 1127.5,828.6 1128.4,901.0 1129.3,893.3 1130.2,844.6 1131.1,830.0 1132.0,896.7 1132.9,855.5 1133.8,832.7 1134.7,886.2 1135.6,893.0 1136.5,839.4 1137.4,852.5 1138.3,902.0 1139.2,828.2 1140.1,852.0 1141.0,827.9 1141.9,846.1 1142.8,853.4 1143.7,851.7 1144.6,893.2 1145.5,852.7 1146.4,833.5 1147.3,896.7 1148.2,853.3 1149.1,880.6 1150.0,876.2 1150.9,870.4 1151.8,835.7 1152.7,881.2 1153.6,869.5 1154.5,829.0 1155.4,857.2 1156.3,879.9 1157.2,837.5 1158.1,825.7 1159.0,859.3 1159.9,852.5 1160.8,823.6 1161.7,831.8 1162.6,845.5 1163.5,829.5 1164.4,844.7 1165.3,843.7 1166.2,895.9 1167.1,876.5 1168.0,870.3 1168.9,869.6 1169.8,875.6 1170.7,821.4 1171.6,892.2 1172.5,840.9 1173.4,822.6 1174.3,850.7 1175.2,867.0 1176.1,854.2 1177.0,824.3 1177.9,873.7 1178.8,847.4 1179.7,832.1 1180.6,845.2 1181.5,858.1 1182.4,842.4 1183.3,820.4 1184.2,829.2 1185.1,839.9 1186.0,831.6 1186.9,819.5 1187.8,853.2 1188.7,854.4 1189.6,848.2 1190.5,854.0 1191.4,890.9 1192.3,849.6 1193.2,847.7 1194.1,820.6 1195.0,825.3 1195.9,892.5 1196.8,835.1 1197.7,892.1 1198.6,860.6 1199.6,887.7 1200.5,822.3 1201.4,888.7 1202.3,832.9 1203.2,873.7 1204.1,868.9 1205.0,889.6 1205.9,857.1 1206.8,829.5 1207.7,858.1 1208.6,839.3 1209.5,874.3 1210.4,858.3 1211.3,847.9 1212.2,836.6 1213.1,890.7 1214.0,867.4 1214.9,890.1 1215.8,848.6 1216.7,858.4 1217.6,863.6 1218.5,888.5 1219.4,818.3 1220.3,855.1 1221.2,889.4 1222.1,839.5 1223.0,825.6 1223.9,888.4 1224.8,889.5 1225.7,845.9 1226.6,875.9 1227.5,831.0 1228.4,885.2 1229.3,862.7 1230.2,847.4 1231.1,888.9 1232.0,888.1 1232.9,841.9 1233.8,840.5 1234.7,820.9 1235.6,839.8 1236.5,851.1 1237.4,863.2 1238.3,869.4 1239.2,841.8 1240.1,873.7 1241.0,857.3 1241.9,843.2 1242.8,854.1 1243.7,886.4 1244.6,819.0 1245.5,851.2 1246.4,884.9 1247.3,827.1 1248.2,870.3 1249.1,816.0 1250.0,835.0 1250.9,845.1 1251.8,888.5 1252.7,869.1 1253.6,816.7 1254.5,834.4 1255.4,869.0 1256.3,817.1 1257.2,856.2 1258.1,833.3 1259.0,825.0 1259.9,836.0 1260.8,822.3 1261.7,844.1 1262.6,846.8 1263.5,817.4 1264.4,851.6 1265.3,875.7 1266.2,879.8 1267.1,837.0 1268.0,884.5 1268.9,858.6 1269.8,881.4 1270.7,834.2 1271.6,817.9 1272.5,888.8 1273.4,844.2 1274.3,866.8 1275.2,854.2 1276.1,852.2 1277.0,883.8 1277.9,818.4 1278.8,841.6 1279.7,818.9 1280.6,863.9 1281.5,831.4 1282.4,841.0 1283.3,819.0 1284.2,833.7 1285.1,857.0 1286.0,834.0 1286.9,873.7 1287.8,886.4 1288.7,838.0 1289.6,862.5 1290.5,853.6 1291.4,885.1 1292.3,833.1 1293.2,849.6 1294.1,867.1 1295.0,870.8 1295.9,855.8 1296.8,853.4 1297.7,832.2 1298.6,867.0 1299.5,865.6 1300.4,822.3 1301.3,866.5 1302.2,847.0 1303.1,851.4 1304.0,886.1 1304.9,889.9 1305.8,863.8 1306.7,875.2 1307.6,891.3 1308.5,854.6 1309.4,854.9 1310.3,890.2 1311.2,857.2 1312.1,891.1 1313.0,847.3 1313.9,856.9 1314.8,823.1 1315.7,860.4 1316.6,825.5 1317.6,824.5 1318.5,881.6 1319.4,864.9 1320.3,823.8 1321.2,823.9 1322.1,831.4 1323.0,872.6 1323.9,861.6 1324.8,841.5 1325.7,886.6 1326.6,856.5 1327.5,855.4 1328.4,856.6 1329.3,894.5 1330.2,872.2 1331.1,844.3 1332.0,850.9 1332.9,864.9 1333.8,878.0 1334.7,827.1 1335.6,851.9 1336.5,864.3 1337.4,897.3 1338.3,849.5 1339.2,888.3 1340.1,898.0 1341.0,897.8 1341.9,892.1 1342.8,831.1 1343.7,878.1 1344.6,839.0 1345.5,877.2 1346.4,898.9 1347.3,878.3 1348.2,865.5 1349.1,876.2 1350.0,847.0 1350.9,830.7 1351.8,846.9 1352.7,897.3 1353.6,838.7 1354.5,891.4 1355.4,845.4 1356.3,861.8 1357.2,833.7 1358.1,900.2 1359.0,854.0 1359.9,851.8 1360.8,863.2 1361.7,858.2 1362.6,867.1 1363.5,888.5 1364.4,902.5 1365.3,901.0 1366.2,879.2 1367.1,846.7 1368.0,901.0 1368.9,898.3 1369.8,880.9 1370.7,846.7 1371.6,901.1 1372.5,858.9 1373.4,890.5 1374.3,900.2 1375.2,892.0 1376.1,872.3 1377.0,885.6 1377.9,854.5 1378.8,908.7 1379.7,901.0 1380.6,838.3 1381.5,907.1 1382.4,910.1 1383.3,852.5 1384.2,903.6 1385.1,896.0 1386.0,877.3 1386.9,897.3 1387.8,876.3 1388.7,859.7 1389.6,867.5 1390.5,911.1 1391.4,843.3 1392.3,842.6 1393.2,848.2 1394.1,910.6 1395.0,913.5 1395.9,859.8 1396.8,856.2 1397.7,911.6 1398.6,844.3 1399.5,866.1 1400.4,897.1 1401.3,912.4 1402.2,896.0 1403.1,900.5 1404.0,881.4 1404.9,877.4 1405.8,871.3 1406.7,897.4 1407.6,867.0 1408.5,895.6 1409.4,898.6 1410.3,867.5 1411.2,887.6 1412.1,865.7 1413.0,875.8 1413.9,881.8 1414.8,859.3 1415.7,893.9 1416.6,878.5 1417.5,855.8 1418.4,855.8 1419.3,851.3 1420.2,918.0 1421.1,866.7 1422.0,900.1 1422.9,914.2 1423.8,885.7 1424.7,920.9 1425.6,852.4 1426.5,852.9 1427.4,908.1 1428.3,874.2 1429.2,924.5 1430.1,902.5 1431.0,886.9 1431.9,888.9 1432.8,884.4 1433.7,886.2 1434.6,902.2 1435.6,914.0 1436.5,860.7 1437.4,857.7 1438.3,897.7 1439.2,865.5 1440.1,873.9 1441.0,857.7 1441.9,905.3 1442.8,862.4 1443.7,873.9 1444.6,859.3 1445.5,897.7 1446.4,900.8 1447.3,859.8 1448.2,919.7 1449.1,863.4 1450.0,860.9 1450.9,865.7 1451.8,925.1 1452.7,932.6 1453.6,873.7 1454.5,915.7 1455.4,929.5 1456.3,871.3 1457.2,919.1 1458.1,865.5 1459.0,910.1 1459.9,890.6 1460.8,937.8 1461.7,897.6 1462.6,939.0 1463.5,917.2 1464.4,905.7 1465.3,937.7 1466.2,879.7 1467.1,924.9 1468.0,878.5 1468.9,924.6 1469.8,910.0 1470.7,886.9 1471.6,927.8 1472.5,929.1 1473.4,871.7 1474.3,898.7 1475.2,945.5 1476.1,933.1 1477.0,932.6 1477.9,905.7 1478.8,912.4 1479.7,940.1 1480.6,913.2 1481.5,886.6 1482.4,932.4 1483.3,923.4 1484.2,907.8 1485.1,901.1 1486.0,908.5 1486.9,936.7 1487.8,890.9 1488.7,935.8 1489.6,918.4 1490.5,898.6 1491.4,927.4 1492.3,940.9 1493.2,903.6 1494.1,906.4 1495.0,890.7 1495.9,925.6 1496.8,893.2 1497.7,948.2 1498.6,942.5 1499.5,934.5 1500.4,913.8 1501.3,887.8 1502.2,910.3 1503.1,928.9 1504.0,959.7 1504.9,891.0 1505.8,929.4 1506.7,887.8 1507.6,943.3 1508.5,908.7 1509.4,899.2 1510.3,922.7 1511.2,945.6 1512.1,933.6 1513.0,937.5 1513.9,944.8 1514.8,959.0 1515.7,919.5 1516.6,948.0 1517.5,893.5 1518.4,917.6 1519.3,947.6 1520.2,923.8 1521.1,946.2 1522.0,921.7 1522.9,929.4 1523.8,924.5 1524.7,961.2 1525.6,905.2 1526.5,959.7 1527.4,936.8 1528.3,949.2 1529.2,902.7 1530.1,927.3 1531.0,966.5 1531.9,913.7 1532.8,967.4 1533.7,971.8 1534.6,931.1 1535.5,934.2 1536.4,974.9 1537.3,956.7 1538.2,939.9 1539.1,935.4 1540.0,943.0 1540.9,951.6 1541.8,960.7 1542.7,952.0 1543.6,922.4 1544.5,982.9 1545.4,909.5 1546.3,950.8 1547.2,952.9 1548.1,933.9 1549.0,984.2 1549.9,922.9 1550.8,969.5 1551.7,911.6 1552.7,985.6 1553.6,944.9 1554.5,987.9 1555.4,938.8 1556.3,941.3 1557.2,940.0 1558.1,978.7 1559.0,981.9 1559.9,918.2 1560.8,922.0 1561.7,945.5 1562.6,984.5 1563.5,982.4 1564.4,918.3 1565.3,956.5 1566.2,961.1 1567.1,938.4 1568.0,928.6 1568.9,951.2 1569.8,975.0 1570.7,996.2 1571.6,981.8 1572.5,995.9 1573.4,953.6 1574.3,923.5 1575.2,949.2 1576.1,948.0 1577.0,946.3 1577.9,927.1 1578.8,948.3 1579.7,941.6 1580.6,954.2 1581.5,981.3 1582.4,976.0 1583.3,929.1 1584.2,995.1 1585.1,970.9 1586.0,988.3 1586.9,930.6 1587.8,1005.2 1588.7,965.4 1589.6,957.3 1590.5,949.3 1591.4,973.5 1592.3,933.5 1593.2,941.6 1594.1,1007.7 1595.0,966.1 1595.9,935.7 1596.8,937.9 1597.7,987.8 1598.6,978.0 1599.5,1004.4 1600.4,951.0 1601.3,962.2 1602.2,943.5 1603.1,1012.0 1604.0,1010.5 1604.9,945.8 1605.8,955.3 1606.7,990.7 1607.6,942.3 1608.5,1014.3 1609.4,960.2 1610.3,1008.7 1611.2,980.2 1612.1,956.1 1613.0,1009.2 1613.9,1016.6 1614.8,961.3 1615.7,996.8 1616.6,988.5 1617.5,980.1 1618.4,986.7 1619.3,974.7 1620.2,972.8 1621.1,1000.2 1622.0,985.2 1622.9,969.1 1623.8,975.0 1624.7,951.8 1625.6,1021.0 1626.5,1012.7 1627.4,992.9 1628.3,1020.8 1629.2,972.8 1630.1,995.7 1631.0,1005.7 1631.9,986.6 1632.8,1008.8 1633.7,999.2 1634.6,1015.5 1635.5,984.5 1636.4,1007.6 1637.3,959.4 1638.2,994.4 1639.1,999.5 1640.0,989.3 1640.9,1017.5 1641.8,966.4 1642.7,1017.6 1643.6,960.6 1644.5,1025.3 1645.4,968.4 1646.3,961.9 1647.2,1012.7 1648.1,983.5 1649.0,1029.6 1649.9,1010.9 1650.8,969.3 1651.7,986.3 1652.6,990.0 1653.5,993.5 1654.4,990.9 1655.3,1028.1 1656.2,988.3 1657.1,1001.1 1658.0,979.7 1658.9,1030.5 1659.8,1008.7 1660.7,1004.3 1661.6,968.9 1662.5,1016.9 1663.4,980.9 1664.3,1011.9 1665.2,1011.9 1666.1,1028.8 1667.0,1035.5 1667.9,1032.9 1668.8,1012.7 1669.7,1036.7 1670.7,1027.5 1671.6,1037.5 1672.5,1037.2 1673.4,1034.6 1674.3,990.3 1675.2,995.2 1676.1,1033.4 1677.0,1014.1 1677.9,977.9 1678.8,997.8 1679.7,1024.1 1680.6,1021.3 1681.5,994.2 1682.4,1006.5 1683.3,1037.0 1684.2,984.4 1685.1,1002.9 1686.0,989.7 1686.9,1003.6 1687.8,1033.3 1688.7,1019.4 1689.6,1028.5 1690.5,1004.1 1691.4,1014.3 1692.3,1021.2 1693.2,1013.7 1694.1,1011.4" fill="none" stroke="#73bf69" stroke-width="1.7" stroke-linejoin="round"/>
<rect x="938.5" y="1128" width="21" height="6" rx="1.5" fill="#73bf69"/>
<text x="971.80" y="1136.2" font-size="18" fill="#ccccdc" font-weight="normal" textLength="72.53" lengthAdjust="spacingAndGlyphs" >Humidity</text>
<rect x="1728.75" y="714.9" width="798.5" height="442.35" rx="3" fill="#181b1f" stroke="#24272c" stroke-width="1.5"/>
<text x="2045.51" y="747.4" font-size="20" fill="#d2d3de" font-weight="normal" textLength="164.81" lengthAdjust="spacingAndGlyphs" stroke="#d2d3de" stroke-width="0.7">Device-3 - battery</text>
<rect x="1799" y="788" width="703" height="219.3" fill="#25322a"/>
<rect x="1799" y="1007.3" width="703" height="70.7" fill="#3a2128"/>
<rect x="1818.25" y="788" width="1.5" height="295" fill="rgba(204,204,220,0.085)"/>
<text x="1797.05" y="1105.5" font-size="18" fill="#c7c7d1" font-weight="normal" textLength="43.96" lengthAdjust="spacingAndGlyphs" >14:00</text>
<rect x="1935.45" y="788" width="1.5" height="295" fill="rgba(204,204,220,0.085)"/>
<text x="1914.25" y="1105.5" font-size="18" fill="#c7c7d1" font-weight="normal" textLength="43.96" lengthAdjust="spacingAndGlyphs" >15:00</text>
<rect x="2052.65" y="788" width="1.5" height="295" fill="rgba(204,204,220,0.085)"/>
<text x="2031.45" y="1105.5" font-size="18" fill="#c7c7d1" font-weight="normal" textLength="43.96" lengthAdjust="spacingAndGlyphs" >16:00</text>
<rect x="2169.85" y="788" width="1.5" height="295" fill="rgba(204,204,220,0.085)"/>
<text x="2148.65" y="1105.5" font-size="18" fill="#c7c7d1" font-weight="normal" textLength="43.96" lengthAdjust="spacingAndGlyphs" >17:00</text>
<rect x="2287.05" y="788" width="1.5" height="295" fill="rgba(204,204,220,0.085)"/>
<text x="2265.85" y="1105.5" font-size="18" fill="#c7c7d1" font-weight="normal" textLength="43.96" lengthAdjust="spacingAndGlyphs" >18:00</text>
<rect x="2404.25" y="788" width="1.5" height="295" fill="rgba(204,204,220,0.085)"/>
<text x="2383.05" y="1105.5" font-size="18" fill="#c7c7d1" font-weight="normal" textLength="43.96" lengthAdjust="spacingAndGlyphs" >19:00</text>
<rect x="1794" y="1077.25" width="708" height="1.5" fill="rgba(204,204,220,0.085)"/>
<text x="1761.28" y="1083.1" font-size="18" fill="#c7c7d1" font-weight="normal" textLength="23.93" lengthAdjust="spacingAndGlyphs" >0%</text>
<rect x="1794" y="1024.45" width="708" height="1.5" fill="rgba(204,204,220,0.085)"/>
<text x="1752.08" y="1030.3" font-size="18" fill="#c7c7d1" font-weight="normal" textLength="33.15" lengthAdjust="spacingAndGlyphs" >20%</text>
<rect x="1794" y="971.65" width="708" height="1.5" fill="rgba(204,204,220,0.085)"/>
<text x="1752.08" y="977.5" font-size="18" fill="#c7c7d1" font-weight="normal" textLength="33.15" lengthAdjust="spacingAndGlyphs" >40%</text>
<rect x="1794" y="918.85" width="708" height="1.5" fill="rgba(204,204,220,0.085)"/>
<text x="1752.08" y="924.7" font-size="18" fill="#c7c7d1" font-weight="normal" textLength="33.15" lengthAdjust="spacingAndGlyphs" >60%</text>
<rect x="1794" y="866.05" width="708" height="1.5" fill="rgba(204,204,220,0.085)"/>
<text x="1752.08" y="871.9" font-size="18" fill="#c7c7d1" font-weight="normal" textLength="33.15" lengthAdjust="spacingAndGlyphs" >80%</text>
<rect x="1794" y="813.25" width="708" height="1.5" fill="rgba(204,204,220,0.085)"/>
<text x="1742.88" y="819.1" font-size="18" fill="#c7c7d1" font-weight="normal" textLength="42.36" lengthAdjust="spacingAndGlyphs" >100%</text>
<line x1="1799" y1="1007.3" x2="2502" y2="1007.3" stroke="#73bf69" stroke-width="1.8" stroke-dasharray="10,10" opacity="0.9"/>
<polyline points="1799.7,835.6 1819.0,814.0 2287.8,814.0 2502.3,1057.4" fill="none" stroke="#73bf69" stroke-width="2" stroke-linejoin="round"/>
<rect x="1747.5" y="1128" width="21" height="6" rx="1.5" fill="#73bf69"/>
<text x="1780.80" y="1136.2" font-size="18" fill="#ccccdc" font-weight="normal" textLength="57.13" lengthAdjust="spacingAndGlyphs" >Battery</text>
<path d="M126.4 1191.4 l4.4 4.4 l4.4 -4.4" fill="none" stroke="#ccccdc" stroke-width="2" stroke-linecap="round" stroke-linejoin="round"/>
<text x="143.60" y="1199.8" font-size="22.6" fill="#d4d5e0" font-weight="bold" textLength="93.74" lengthAdjust="spacingAndGlyphs" >Device-4</text>
<rect x="110.75" y="1227.9" width="799.5" height="442.35" rx="3" fill="#181b1f" stroke="#24272c" stroke-width="1.5"/>
<text x="404.44" y="1260.4" font-size="20" fill="#d2d3de" font-weight="normal" textLength="211.63" lengthAdjust="spacingAndGlyphs" stroke="#d2d3de" stroke-width="0.7">Device-4 - temperature</text>
<rect x="199.95" y="1301" width="1.5" height="40" fill="rgba(204,204,220,0.085)"/>
<rect x="317.45" y="1301" width="1.5" height="40" fill="rgba(204,204,220,0.085)"/>
<rect x="434.95" y="1301" width="1.5" height="40" fill="rgba(204,204,220,0.085)"/>
<rect x="552.45" y="1301" width="1.5" height="40" fill="rgba(204,204,220,0.085)"/>
<rect x="669.95" y="1301" width="1.5" height="40" fill="rgba(204,204,220,0.085)"/>
<rect x="787.45" y="1301" width="1.5" height="40" fill="rgba(204,204,220,0.085)"/>
<rect x="919.75" y="1227.9" width="799.5" height="442.35" rx="3" fill="#181b1f" stroke="#24272c" stroke-width="1.5"/>
<text x="1229.16" y="1260.4" font-size="20" fill="#d2d3de" font-weight="normal" textLength="180.85" lengthAdjust="spacingAndGlyphs" stroke="#d2d3de" stroke-width="0.7">Device-4 - humidity</text>
<rect x="999.55" y="1301" width="1.5" height="40" fill="rgba(204,204,220,0.085)"/>
<rect x="1118.55" y="1301" width="1.5" height="40" fill="rgba(204,204,220,0.085)"/>
<rect x="1237.55" y="1301" width="1.5" height="40" fill="rgba(204,204,220,0.085)"/>
<rect x="1356.55" y="1301" width="1.5" height="40" fill="rgba(204,204,220,0.085)"/>
<rect x="1475.55" y="1301" width="1.5" height="40" fill="rgba(204,204,220,0.085)"/>
<rect x="1594.55" y="1301" width="1.5" height="40" fill="rgba(204,204,220,0.085)"/>
<rect x="1728.75" y="1227.9" width="798.5" height="442.35" rx="3" fill="#181b1f" stroke="#24272c" stroke-width="1.5"/>
<text x="2045.51" y="1260.4" font-size="20" fill="#d2d3de" font-weight="normal" textLength="164.81" lengthAdjust="spacingAndGlyphs" stroke="#d2d3de" stroke-width="0.7">Device-4 - battery</text>
<rect x="1799" y="1301" width="703" height="236.7" fill="#25322a"/>
<rect x="1818.25" y="1301" width="1.5" height="40" fill="rgba(204,204,220,0.085)"/>
<rect x="1935.45" y="1301" width="1.5" height="40" fill="rgba(204,204,220,0.085)"/>
<rect x="2052.65" y="1301" width="1.5" height="40" fill="rgba(204,204,220,0.085)"/>
<rect x="2169.85" y="1301" width="1.5" height="40" fill="rgba(204,204,220,0.085)"/>
<rect x="2287.05" y="1301" width="1.5" height="40" fill="rgba(204,204,220,0.085)"/>
<rect x="2404.25" y="1301" width="1.5" height="40" fill="rgba(204,204,220,0.085)"/>
</svg></body></html>
